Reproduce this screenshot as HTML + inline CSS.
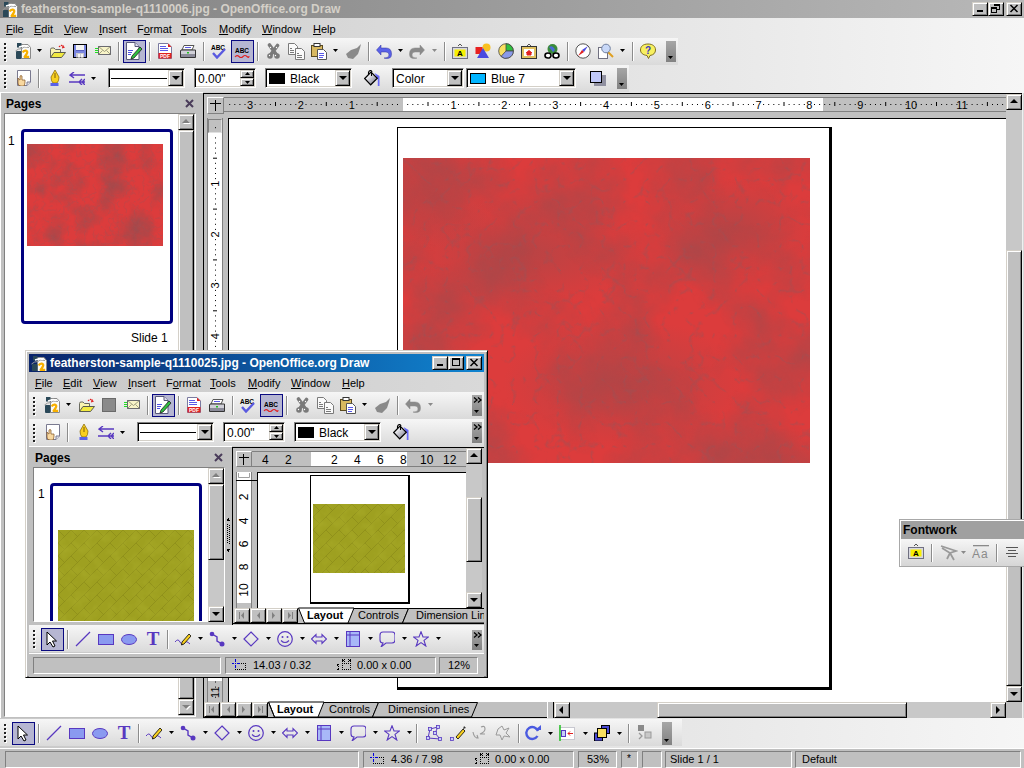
<!DOCTYPE html>
<html><head><meta charset="utf-8"><style>
*{margin:0;padding:0;box-sizing:border-box}
html,body{width:1024px;height:768px;overflow:hidden;background:#c0c0c0;font-family:"Liberation Sans",sans-serif;font-size:11px;color:#000}
.a{position:absolute}
.t{position:absolute;white-space:nowrap;line-height:13px}
.sunk{position:absolute;border-style:solid;border-width:1px;border-color:#808080 #fff #fff #808080}
.fld{position:absolute;background:#fff;border:1px solid;border-color:#808080 #fff #fff #808080;box-shadow:inset 1px 1px 0 #000,inset -1px -1px 0 #d4d0c8}
.btn{position:absolute;background:#c0c0c0;border:1px solid;border-color:#d4d0c8 #000 #000 #d4d0c8;box-shadow:inset 1px 1px 0 #fff,inset -1px -1px 0 #808080}
.tb{position:absolute;background:linear-gradient(#f6f6f6,#dadada)}
.grip{position:absolute;width:2px;background:repeating-linear-gradient(#2a2a2a 0 2px,transparent 2px 3px)}
.chev{position:absolute;background:linear-gradient(#a6a6a6,#828282)}
.cb{position:absolute;background:#c0c0c0;border:1px solid;border-color:#d4d0c8 #000 #000 #d4d0c8;box-shadow:inset 1px 1px 0 #fff,inset -1px -1px 0 #808080}
.arr{position:absolute;width:0;height:0;border-style:solid;border-color:#000 transparent transparent transparent;border-width:4px 4px 0 4px}
</style></head><body>
<svg width="0" height="0" style="position:absolute">
<defs>
<filter id="redtex" x="0" y="0" width="100%" height="100%" color-interpolation-filters="sRGB">
 <feTurbulence type="fractalNoise" baseFrequency="0.04" numOctaves="5" seed="4" result="n1"/>
 <feColorMatrix in="n1" type="matrix" values="0 0 0 0 0.62  0 0 0 0 0.29  0 0 0 0 0.30  1.8 0 0 0 -0.7" result="c1"/>
 <feTurbulence type="turbulence" baseFrequency="0.12" numOctaves="2" seed="3" result="n2"/>
 <feColorMatrix in="n2" type="matrix" values="0 0 0 0 0.6  0 0 0 0 0.32  0 0 0 0 0.34  -2 0 0 0 0.35" result="c2"/>
 <feMerge><feMergeNode in="c1"/><feMergeNode in="c2"/></feMerge>
</filter>
<filter id="redtex2" x="0" y="0" width="100%" height="100%" color-interpolation-filters="sRGB">
 <feTurbulence type="fractalNoise" baseFrequency="0.012" numOctaves="6" seed="7" result="n1"/>
 <feColorMatrix in="n1" type="matrix" values="0 0 0 0 0.62  0 0 0 0 0.29  0 0 0 0 0.30  1.6 0 0 0 -0.65" result="c1"/>
 <feTurbulence type="turbulence" baseFrequency="0.045" numOctaves="3" seed="3" result="n2"/>
 <feColorMatrix in="n2" type="matrix" values="0 0 0 0 0.6  0 0 0 0 0.32  0 0 0 0 0.34  -3 0 0 0 0.5" result="c2"/>
 <feMerge><feMergeNode in="c1"/><feMergeNode in="c2"/></feMerge>
</filter>
<filter id="olivetex" x="0" y="0" width="100%" height="100%" color-interpolation-filters="sRGB">
 <feTurbulence type="fractalNoise" baseFrequency="0.08" numOctaves="3" seed="2"/>
 <feColorMatrix type="matrix" values="0 0 0 0 0.66  0 0 0 0 0.67  0 0 0 0 0.16  1.4 0 0 0 -0.6"/>
</filter>
<pattern id="herr" width="13" height="13" patternUnits="userSpaceOnUse">
 <path d="M0 0 L6.5 6.5 M6.5 6.5 L13 0 M0 13 L6.5 6.5" stroke="#6a6a10" stroke-width=".8" opacity=".35" fill="none"/>
</pattern>
</defs></svg>
<div class="a" style="left:0px;top:0px;width:1024px;height:18px;background:linear-gradient(90deg,#808080,#b8b8b8)"></div>
<svg class="a" style="left:2px;top:1px" width="16" height="16" viewBox="0 0 16 16" ><path d="M6.5 2.5 H13 L15.5 5.5 V16.5 H6.5Z" fill="#fafafa" stroke="#8a8a8a" stroke-width="1"/>
<rect x="1" y="9" width="5.5" height="8" rx="1" fill="#2a4858"/><rect x="2" y="1" width="4.5" height="4.5" fill="#2a4858"/>
<path d="M0.5 9 Q3 6.5 7 6.5 L9 5 L14 5.5" fill="none" stroke="#9a9a9a" stroke-width="1"/><path d="M4 5 L9 3.5 L12 4.5" fill="none" stroke="#fff" stroke-width="1.4"/>
<path d="M7.8 10.5 Q8.6 8.5 10.8 8.7 Q13.2 9.3 11.6 12 L9.6 14.8 H14.2" fill="none" stroke="#f8b000" stroke-width="2.3" stroke-linejoin="round"/></svg>
<div class="t" style="left:21px;top:3px;font-weight:bold;color:#d4d0c8;font-size:12px">featherston-sample-q1110006.jpg - OpenOffice.org Draw</div>
<div class="btn" style="left:972px;top:2px;width:16px;height:14px"></div>
<div class="btn" style="left:988px;top:2px;width:16px;height:14px"></div>
<div class="btn" style="left:1006px;top:2px;width:16px;height:14px"></div>
<svg class="a" style="left:976px;top:4px" width="9" height="9" viewBox="0 0 9 9" shape-rendering="crispEdges"><rect x="1" y="6" width="6" height="2" fill="#000"/></svg>
<svg class="a" style="left:991px;top:3px" width="10" height="10" viewBox="0 0 10 10" shape-rendering="crispEdges"><rect x="3" y="1" width="6" height="2" fill="#000"/><rect x="8" y="1" width="1" height="5" fill="#000"/><rect x="6" y="6" width="3" height="1" fill="#000"/><rect x="0" y="4" width="6" height="2" fill="#c0c0c0"/><rect x="0" y="4" width="6" height="2" fill="#000"/><rect x="0" y="4" width="1" height="6" fill="#000"/><rect x="5" y="4" width="1" height="6" fill="#000"/><rect x="0" y="9" width="6" height="1" fill="#000"/></svg>
<svg class="a" style="left:1009px;top:4px" width="10" height="9" viewBox="0 0 10 9" ><path d="M1.5 1 L8.5 8 M8.5 1 L1.5 8" stroke="#000" stroke-width="1.5"/></svg>
<div class="a" style="left:0px;top:18px;width:1024px;height:75px;background:linear-gradient(90deg,#c8c8c8,#f6f6f6)"></div>
<div class="t" style="left:6px;top:23px;font-size:11px"><u>F</u>ile</div>
<div class="t" style="left:34px;top:23px;font-size:11px"><u>E</u>dit</div>
<div class="t" style="left:64px;top:23px;font-size:11px"><u>V</u>iew</div>
<div class="t" style="left:99px;top:23px;font-size:11px"><u>I</u>nsert</div>
<div class="t" style="left:137px;top:23px;font-size:11px">F<u>o</u>rmat</div>
<div class="t" style="left:181px;top:23px;font-size:11px"><u>T</u>ools</div>
<div class="t" style="left:219px;top:23px;font-size:11px"><u>M</u>odify</div>
<div class="t" style="left:262px;top:23px;font-size:11px"><u>W</u>indow</div>
<div class="t" style="left:313px;top:23px;font-size:11px"><u>H</u>elp</div>
<div class="tb" style="left:0px;top:38px;width:678px;height:27px"></div>
<svg class="a" style="left:4px;top:43px" width="3" height="19" viewBox="0 0 3 19" shape-rendering="crispEdges"><rect x="1" y="1" width="2" height="2" fill="#fff"/><rect x="0" y="0" width="2" height="2" fill="#202020"/><rect x="1" y="5" width="2" height="2" fill="#fff"/><rect x="0" y="4" width="2" height="2" fill="#202020"/><rect x="1" y="9" width="2" height="2" fill="#fff"/><rect x="0" y="8" width="2" height="2" fill="#202020"/><rect x="1" y="13" width="2" height="2" fill="#fff"/><rect x="0" y="12" width="2" height="2" fill="#202020"/><rect x="1" y="17" width="2" height="2" fill="#fff"/><rect x="0" y="16" width="2" height="2" fill="#202020"/></svg>
<svg class="a" style="left:15px;top:42px" width="17" height="18" viewBox="0 0 17 18" ><path d="M6.5 2.5 H13 L15.5 5.5 V16.5 H6.5Z" fill="#fafafa" stroke="#8a8a8a" stroke-width="1"/>
<rect x="1" y="9" width="5.5" height="8" rx="1" fill="#2a4858"/><rect x="2" y="1" width="4.5" height="4.5" fill="#2a4858"/>
<path d="M0.5 9 Q3 6.5 7 6.5 L9 5 L14 5.5" fill="none" stroke="#9a9a9a" stroke-width="1"/><path d="M4 5 L9 3.5 L12 4.5" fill="none" stroke="#fff" stroke-width="1.4"/>
<path d="M7.8 10.5 Q8.6 8.5 10.8 8.7 Q13.2 9.3 11.6 12 L9.6 14.8 H14.2" fill="none" stroke="#f8b000" stroke-width="2.3" stroke-linejoin="round"/></svg>
<svg class="a" style="left:37px;top:49px" width="5" height="3" viewBox="0 0 5 3" ><path d="M0 0H5L2.5 3Z" fill="#000"/></svg>
<svg class="a" style="left:49px;top:44px" width="17" height="15" viewBox="0 0 17 15" ><path d="M1.5 13.5 V5.5 Q1.5 4 3 4 H5 L6.5 5.5 H11.5 V8" fill="#faf4b0" stroke="#6a6a60" stroke-width="1"/>
<path d="M1.5 13.5 L5 8.5 H16.5 L12.5 13.5Z" fill="#f2ea40" stroke="#5a5a50" stroke-width="1"/>
<path d="M10 3 Q12 0.5 14.5 2" fill="none" stroke="#e02020" stroke-width="1.2" stroke-dasharray="1.5 .8"/><path d="M13.5 1 L16 3.5 L13 4.5Z" fill="#e02020"/></svg>
<svg class="a" style="left:73px;top:44px" width="14" height="14" viewBox="0 0 14 14" ><rect x="0.5" y="0.5" width="13" height="13" fill="#7a86e0" stroke="#000" stroke-width="1"/><rect x="0" y="0" width="14" height="1" fill="#000"/>
<rect x="3" y="1" width="8" height="5" fill="#f4f4f4"/><rect x="3" y="6" width="8" height="1" fill="#5a62c0"/><rect x="3" y="9" width="8" height="4.5" fill="#c8c8d0"/><rect x="5" y="10" width="2" height="3.5" fill="#f4f4f4"/><rect x="8" y="10" width="2" height="3.5" fill="#f4f4f4"/></svg>
<svg class="a" style="left:95px;top:46px" width="17" height="10" viewBox="0 0 17 10" ><rect x="3.5" y="0.5" width="12" height="8" fill="#f8f4c8" stroke="#6a6a70"/><path d="M3.5 0.5 L9.5 5.5 L15.5 0.5 M3.5 8.5 L7.5 4.5 M15.5 8.5 L11.5 4.5" fill="none" stroke="#8a8a70" stroke-width=".8"/>
<path d="M0 2.5H3M0 4.5H3M0 6.5H3" stroke="#20e020" stroke-width="1"/></svg>
<div class="a" style="left:118px;top:42px;width:1px;height:19px;background:#8c8c8c"></div><div class="a" style="left:119px;top:42px;width:1px;height:19px;background:#fff"></div>
<div class="a" style="left:123px;top:40px;width:23px;height:23px;background:#b6b6d2;border:1px solid #0a0a80"></div>
<svg class="a" style="left:124px;top:41px" width="20" height="20" viewBox="0 0 20 20" ><path d="M2.5 1.5 H11 L15 5.5 V18.5 H2.5Z" fill="#fff" stroke="#58587a" stroke-width="1"/><path d="M11 1.5 V5.5 H15" fill="#dde" stroke="#58587a"/>
<path d="M4 9.5H9M4 11.5H8M4 13.5H7" stroke="#5050e0" stroke-width="1"/>
<path d="M8 15 L16 6 L18 8 L10 17 L7 18Z" fill="#30c040" stroke="#202020" stroke-width=".8"/></svg>
<div class="a" style="left:149px;top:42px;width:1px;height:19px;background:#8c8c8c"></div><div class="a" style="left:150px;top:42px;width:1px;height:19px;background:#fff"></div>
<svg class="a" style="left:158px;top:43px" width="14" height="16" viewBox="0 0 14 16" ><path d="M0.5 0.5 H10 L13.5 4 V15.5 H0.5Z" fill="#fff" stroke="#7a7aa0"/><path d="M10 0.5 L13.5 4 H10Z" fill="#e02020"/>
<path d="M2 3.5H8M2 5.5H10M2 7.5H10" stroke="#5a5ae8"/><rect x="0.5" y="10" width="13" height="5.5" fill="#e02020"/>
<text x="7" y="14.7" font-size="5" font-family="Liberation Sans" font-weight="bold" fill="#fff" text-anchor="middle">PDF</text></svg>
<svg class="a" style="left:180px;top:45px" width="16" height="13" viewBox="0 0 16 13" ><path d="M4 0.5 H14 L12 5 H2Z" fill="#fff" stroke="#555"/><path d="M5 2.5H11" stroke="#5a5ae8" stroke-width="1"/>
<path d="M1 5 H15.5 V12.5 H0.5 V6Z" fill="#d0d0d8" stroke="#333"/><rect x="1" y="9" width="14" height="3" fill="#8a8a98"/><rect x="7" y="7" width="2" height="1.5" fill="#20c020"/></svg>
<div class="a" style="left:203px;top:42px;width:1px;height:19px;background:#8c8c8c"></div><div class="a" style="left:204px;top:42px;width:1px;height:19px;background:#fff"></div>
<svg class="a" style="left:210px;top:44px" width="17" height="15" viewBox="0 0 17 15" ><text x="8" y="6" font-size="6.5" font-family="Liberation Sans" font-weight="bold" fill="#000" text-anchor="middle">ABC</text>
<path d="M3 9 L7 13.5 L15 5" fill="none" stroke="#5a5ae0" stroke-width="2.4"/></svg>
<div class="a" style="left:231px;top:40px;width:23px;height:23px;background:#b6b6d2;border:1px solid #0a0a80"></div>
<svg class="a" style="left:234px;top:45px" width="16" height="14" viewBox="0 0 16 14" ><text x="8" y="8" font-size="6.5" font-family="Liberation Sans" font-weight="bold" fill="#000" text-anchor="middle">ABC</text>
<path d="M1 12 Q3 9.5 5 11.5 T9 11.5 T13 11.5 T15 11" fill="none" stroke="#e02020" stroke-width="1.1"/></svg>
<div class="a" style="left:257px;top:42px;width:1px;height:19px;background:#8c8c8c"></div><div class="a" style="left:258px;top:42px;width:1px;height:19px;background:#fff"></div>
<svg class="a" style="left:267px;top:43px" width="13" height="17" viewBox="0 0 13 17" ><path d="M2.5 2 L9.5 12 M10.5 2.5 L3.5 12" stroke="#7a7a7a" stroke-width="3.6" stroke-linecap="round"/>
<circle cx="3" cy="13" r="2.8" fill="#7a7a7a"/><circle cx="10" cy="13" r="2.8" fill="#7a7a7a"/>
<circle cx="3.5" cy="4.5" r=".7" fill="#fff"/><circle cx="9.5" cy="4.5" r=".7" fill="#fff"/><circle cx="2.5" cy="12.5" r=".7" fill="#fff"/><circle cx="8.5" cy="12.5" r=".7" fill="#fff"/></svg>
<svg class="a" style="left:288px;top:43px" width="17" height="17" viewBox="0 0 17 17" ><path d="M0.5 0.5 H6.5 L9.5 3.5 V11.5 H0.5Z" fill="#fafafa" stroke="#7a7a7a"/><path d="M2 5.5H4M2 7.5H6M2 9.5H6" stroke="#7a7a7a" stroke-width="1"/>
<path d="M7.5 5.5 H13.5 L16.5 8.5 V16.5 H7.5Z" fill="#fafafa" stroke="#7a7a7a"/><path d="M9 10.5H11M9 12.5H14M9 14.5H14" stroke="#7a7a7a" stroke-width="1"/></svg>
<svg class="a" style="left:311px;top:43px" width="16" height="17" viewBox="0 0 16 17" ><rect x="0.5" y="2.5" width="11" height="11" fill="#d8b860" stroke="#5a4a20"/><rect x="3" y="0.5" width="6" height="3" fill="#fff" stroke="#333"/>
<path d="M6.5 6.5 H12.5 L15.5 9.5 V16.5 H6.5Z" fill="#fff" stroke="#555"/><path d="M8 10.5H13M8 12.5H13M8 14.5H12" stroke="#5a5ae8" stroke-width="1"/></svg>
<svg class="a" style="left:333px;top:49px" width="5" height="3" viewBox="0 0 5 3" ><path d="M0 0H5L2.5 3Z" fill="#000"/></svg>
<svg class="a" style="left:345px;top:44px" width="16" height="16" viewBox="0 0 16 16" ><path d="M16 0 L12 4 L6 6 L1 10 L3 14 L8 15 L13 10 L15 4Z" fill="#8a8a8a"/></svg>
<div class="a" style="left:368px;top:42px;width:1px;height:19px;background:#8c8c8c"></div><div class="a" style="left:369px;top:42px;width:1px;height:19px;background:#fff"></div>
<svg class="a" style="left:376px;top:44px" width="16" height="16" viewBox="0 0 16 16" ><path d="M5 1 L0.5 6 L5 11 V8 H10 Q13 8 13 11 Q13 14 9 14 L8 14 Q15.5 16 15.5 10 Q15.5 4 10 4 H5Z" fill="#5a62e8" stroke="#3030a0" stroke-width=".5"/></svg>
<svg class="a" style="left:398px;top:49px" width="5" height="3" viewBox="0 0 5 3" ><path d="M0 0H5L2.5 3Z" fill="#000"/></svg>
<svg class="a" style="left:409px;top:44px" width="16" height="16" viewBox="0 0 16 16" ><g transform="translate(16,0) scale(-1,1)"><path d="M5 1 L0.5 6 L5 11 V8 H10 Q13 8 13 11 Q13 14 9 14 L8 14 Q15.5 16 15.5 10 Q15.5 4 10 4 H5Z" fill="#8a8a8a" stroke="#8a8a8a" stroke-width=".5"/></g></svg>
<svg class="a" style="left:432px;top:49px" width="5" height="3" viewBox="0 0 5 3" ><path d="M0 0H5L2.5 3Z" fill="#8a8a8a"/></svg>
<div class="a" style="left:444px;top:42px;width:1px;height:19px;background:#8c8c8c"></div><div class="a" style="left:445px;top:42px;width:1px;height:19px;background:#fff"></div>
<svg class="a" style="left:452px;top:43px" width="16" height="16" viewBox="0 0 16 16" ><path d="M6 3 L8 1 L10 3" fill="none" stroke="#555"/><rect x="0.5" y="4.5" width="15" height="11" fill="#d8d8e0" stroke="#707080"/>
<rect x="2.5" y="6.5" width="11" height="7" fill="#f8f000"/><text x="8" y="13.2" font-size="8" font-family="Liberation Sans" font-weight="bold" fill="#000" text-anchor="middle">A</text></svg>
<svg class="a" style="left:475px;top:43px" width="16" height="16" viewBox="0 0 16 16" ><circle cx="11.5" cy="4.5" r="4" fill="#f8c020"/><rect x="0.5" y="4" width="7" height="7" fill="#e82020"/><path d="M8 5 L14 15 H2Z" fill="#4a4ae0"/></svg>
<svg class="a" style="left:498px;top:43px" width="16" height="16" viewBox="0 0 16 16" ><circle cx="8" cy="8" r="7.3" fill="#f8e060" stroke="#444" stroke-width=".8"/><path d="M8 8 V0.7 A7.3 7.3 0 0 1 15.3 8Z" fill="#30c040" stroke="#444" stroke-width=".8"/>
<path d="M8 8 H15.3 A7.3 7.3 0 0 1 3 13.4Z" fill="#8a9ae8" stroke="#444" stroke-width=".8"/></svg>
<svg class="a" style="left:521px;top:43px" width="16" height="16" viewBox="0 0 16 16" ><path d="M6 3 L8 1 L10 3" fill="none" stroke="#555"/><rect x="0.5" y="3.5" width="15" height="12" fill="#e0c060" stroke="#333"/>
<rect x="3" y="6" width="10" height="7" fill="#fff"/><path d="M5 10 L8 7.5 L11 10 M6 10 V12 H10 V10" fill="#e02020" stroke="#e02020" stroke-width="1"/></svg>
<svg class="a" style="left:544px;top:43px" width="16" height="16" viewBox="0 0 16 16" ><circle cx="8.5" cy="6" r="5" fill="#3a8a3a"/><path d="M5 4 Q8 2 10 5 Q12 7 9 9" fill="#4a6ad8"/>
<path d="M1 12.5 A3 2.5 0 1 0 7 12.5 A3 2.5 0 1 0 1 12.5Z M9 12.5 A3 2.5 0 1 0 15 12.5 A3 2.5 0 1 0 9 12.5Z" fill="#fff" stroke="#000" stroke-width="1.6"/></svg>
<div class="a" style="left:567px;top:42px;width:1px;height:19px;background:#8c8c8c"></div><div class="a" style="left:568px;top:42px;width:1px;height:19px;background:#fff"></div>
<svg class="a" style="left:575px;top:43px" width="16" height="16" viewBox="0 0 16 16" ><circle cx="8" cy="8" r="7.2" fill="#fff" stroke="#555" stroke-width="1"/><path d="M13 3 L9 9 L7 7Z" fill="#4a4ae0"/><path d="M3 13 L7 7 L9 9Z" fill="#e02020"/></svg>
<svg class="a" style="left:598px;top:43px" width="16" height="16" viewBox="0 0 16 16" ><rect x="0.5" y="4.5" width="9" height="11" fill="#fff" stroke="#707080"/><path d="M9.5 8.5 L15 14" stroke="#e0a020" stroke-width="2"/><circle cx="8" cy="5.5" r="4.3" fill="#c8d8f8" stroke="#7080a0" stroke-width="1"/></svg>
<svg class="a" style="left:620px;top:49px" width="5" height="3" viewBox="0 0 5 3" ><path d="M0 0H5L2.5 3Z" fill="#000"/></svg>
<div class="a" style="left:632px;top:42px;width:1px;height:19px;background:#8c8c8c"></div><div class="a" style="left:633px;top:42px;width:1px;height:19px;background:#fff"></div>
<svg class="a" style="left:640px;top:43px" width="16" height="16" viewBox="0 0 16 16" ><path d="M8 1 C13 1 15.5 3.5 15.5 7 C15.5 10 13.5 12 10 12.5 L8.5 15.5 L7 12.5 C3 12 0.5 10 0.5 7 C0.5 3.5 3 1 8 1Z" fill="#f8f060" stroke="#807020" stroke-width="1"/>
<text x="8" y="10.5" font-size="10" font-family="Liberation Sans" font-weight="bold" fill="#3a3ac0" text-anchor="middle">?</text></svg>
<div class="chev" style="left:666px;top:41px;width:10px;height:21px"></div>
<svg class="a" style="left:668px;top:56px" width="5" height="3" viewBox="0 0 5 3" ><path d="M0 0H5L2.5 3Z" fill="#000"/></svg>
<div class="tb" style="left:0px;top:65px;width:629px;height:27px"></div>
<svg class="a" style="left:4px;top:70px" width="3" height="19" viewBox="0 0 3 19" shape-rendering="crispEdges"><rect x="1" y="1" width="2" height="2" fill="#fff"/><rect x="0" y="0" width="2" height="2" fill="#202020"/><rect x="1" y="5" width="2" height="2" fill="#fff"/><rect x="0" y="4" width="2" height="2" fill="#202020"/><rect x="1" y="9" width="2" height="2" fill="#fff"/><rect x="0" y="8" width="2" height="2" fill="#202020"/><rect x="1" y="13" width="2" height="2" fill="#fff"/><rect x="0" y="12" width="2" height="2" fill="#202020"/><rect x="1" y="17" width="2" height="2" fill="#fff"/><rect x="0" y="16" width="2" height="2" fill="#202020"/></svg>
<svg class="a" style="left:15px;top:70px" width="16" height="16" viewBox="0 0 16 16" ><path d="M2.5 0.5 H15.5 V12 L12 15.5 H2.5Z" fill="#fff" stroke="#7a7a90"/><path d="M12 15.5 V12 H15.5" fill="#e0e0e8" stroke="#7a7a90"/>
<path d="M3 8 V13 Q3 16 6 16 H9 Q10 14 10 12 V10 H7 V6 Q6 5 5 6 V10 Q3 9 3 8Z" fill="#f8d8a0" stroke="#805020" stroke-width=".7"/></svg>
<div class="a" style="left:38px;top:69px;width:1px;height:19px;background:#8c8c8c"></div><div class="a" style="left:39px;top:69px;width:1px;height:19px;background:#fff"></div>
<svg class="a" style="left:50px;top:70px" width="10" height="16" viewBox="0 0 10 16" ><path d="M5 0 L9 7 Q9 11 7 13 H3 Q1 11 1 7Z" fill="#f8d020" stroke="#806000" stroke-width=".7"/><path d="M5 3 V8" stroke="#604000" stroke-width=".8"/>
<rect x="0.5" y="13" width="8" height="3" fill="#5a62e8"/></svg>
<svg class="a" style="left:69px;top:72px" width="16" height="13" viewBox="0 0 16 13" ><path d="M16 3H2M5 0 L1 3 L5 6" fill="none" stroke="#5838c0" stroke-width="1.4"/><path d="M0 10H16M13 7 L10 10 L13 13 M16 7 L13 10 L16 13" fill="none" stroke="#5838c0" stroke-width="1.4"/></svg>
<svg class="a" style="left:91px;top:77px" width="5" height="3" viewBox="0 0 5 3" ><path d="M0 0H5L2.5 3Z" fill="#000"/></svg>
<div class="fld" style="left:108px;top:68px;width:77px;height:20px"></div>
<div class="cb" style="left:168px;top:70px;width:15px;height:16px"></div>
<div class="arr" style="left:172px;top:76px"></div>
<div class="a" style="left:111px;top:78px;width:56px;height:1px;background:#000"></div>
<div class="fld" style="left:194px;top:68px;width:62px;height:20px"></div>
<div class="t" style="left:198px;top:73px;font-size:12px">0.00"</div>
<div class="cb" style="left:240px;top:70px;width:14px;height:8px"></div>
<div class="cb" style="left:240px;top:78px;width:14px;height:8px"></div>
<svg class="a" style="left:245px;top:72px" width="5" height="3" viewBox="0 0 5 3" ><path d="M0 3H5L2.5 0Z" fill="#000"/></svg>
<svg class="a" style="left:245px;top:81px" width="5" height="3" viewBox="0 0 5 3" ><path d="M0 0H5L2.5 3Z" fill="#000"/></svg>
<div class="fld" style="left:265px;top:68px;width:87px;height:20px"></div>
<div class="cb" style="left:335px;top:70px;width:15px;height:16px"></div>
<div class="arr" style="left:339px;top:76px"></div>
<div class="a" style="left:269px;top:73px;width:16px;height:11px;background:#000"></div>
<div class="t" style="left:290px;top:73px;font-size:12px">Black</div>
<svg class="a" style="left:364px;top:70px" width="16" height="17" viewBox="0 0 16 17" ><defs><linearGradient id="bk" x1="0" y1="0" x2="1" y2="1"><stop offset="0.2" stop-color="#fff"/><stop offset="1" stop-color="#6a6a80"/></linearGradient></defs>
<path d="M10.5 3 L15.5 6 V16 H13.8 V9.5Z" fill="#6a6af8"/>
<path d="M0.7 8.5 L7 2 L13.3 8.3 L6.7 14.8Z" fill="url(#bk)" stroke="#000" stroke-width="1.2"/>
<path d="M4.5 4.5 V2.5 Q5 0.5 6.5 0.5 Q7.5 0.5 8 2" fill="none" stroke="#000" stroke-width="1.1"/><path d="M7.5 1.5 V6" stroke="#000" stroke-width="1.1"/></svg>
<div class="fld" style="left:392px;top:68px;width:72px;height:20px"></div>
<div class="cb" style="left:447px;top:70px;width:15px;height:16px"></div>
<div class="arr" style="left:451px;top:76px"></div>
<div class="t" style="left:396px;top:73px;font-size:12px">Color</div>
<div class="fld" style="left:466px;top:68px;width:110px;height:20px"></div>
<div class="cb" style="left:559px;top:70px;width:15px;height:16px"></div>
<div class="arr" style="left:563px;top:76px"></div>
<div class="a" style="left:470px;top:73px;width:16px;height:11px;background:#00b4ff;border:1px solid #000"></div>
<div class="t" style="left:491px;top:73px;font-size:12px">Blue 7</div>
<svg class="a" style="left:590px;top:71px" width="16" height="15" viewBox="0 0 16 15" ><rect x="4" y="4" width="12" height="11" fill="#9090a0"/><rect x="0.5" y="0.5" width="11" height="11" fill="#c0c8f8" stroke="#000"/></svg>
<div class="chev" style="left:617px;top:68px;width:10px;height:21px"></div>
<svg class="a" style="left:619px;top:83px" width="5" height="3" viewBox="0 0 5 3" ><path d="M0 0H5L2.5 3Z" fill="#000"/></svg>
<div class="a" style="left:0px;top:92px;width:203px;height:626px;background:#c0c0c0;border-top:1px solid #fff;border-left:1px solid #fff"></div>
<div class="t" style="left:6px;top:97px;font-weight:bold;font-size:12px;line-height:14px">Pages</div>
<svg class="a" style="left:185px;top:99px" width="9" height="9" viewBox="0 0 9 9" ><path d="M1 1 L8 8 M8 1 L1 8" stroke="#4a3c5a" stroke-width="2"/></svg>
<div class="a" style="left:4px;top:113px;width:192px;height:604px;background:#fff;border:1px solid;border-color:#808080 #fff #fff #808080"></div>
<div class="a" style="left:21px;top:129px;width:152px;height:195px;border:3px solid #000080;border-radius:4px;background:#fff"></div>
<svg class="a" style="left:27px;top:144px" width="136" height="102"><rect width="136" height="102" fill="#dc3c3c"/><rect width="136" height="102" filter="url(#redtex)"/></svg>
<div class="t" style="left:8px;top:135px;font-size:12px">1</div>
<div class="t" style="left:131px;top:332px;font-size:12px">Slide 1</div>
<div class="a" style="left:178px;top:114px;width:17px;height:602px;background:#c8c8c8"></div>
<div class="btn" style="left:178px;top:114px;width:16px;height:16px"></div>
<svg class="a" style="left:182px;top:119px" width="9" height="5" viewBox="0 0 9 5" ><path d="M1 5H9L5 1Z" fill="#fff"/><path d="M0 4H8L4 0Z" fill="#808080"/></svg>
<div class="btn" style="left:178px;top:130px;width:16px;height:569px"></div>
<div class="btn" style="left:178px;top:699px;width:16px;height:16px"></div>
<svg class="a" style="left:182px;top:705px" width="9" height="5" viewBox="0 0 9 5" ><path d="M1 1H9L5 5Z" fill="#fff"/><path d="M0 0H8L4 4Z" fill="#808080"/></svg>
<div class="a" style="left:203px;top:93px;width:819px;height:625px;background:#c0c0c0;border-left:1px solid #000;border-top:1px solid #000"></div>
<div class="a" style="left:207px;top:97px;width:17px;height:17px;border:1px solid;border-color:#fff #808080 #808080 #fff"></div>
<div class="a" style="left:215px;top:100px;width:1px;height:11px;background:#000"></div>
<div class="a" style="left:210px;top:103px;width:11px;height:1px;background:#000"></div>
<div class="a" style="left:224px;top:97px;width:782px;height:15px;background:#c0c0c0;border-top:1px solid #808080;border-bottom:1px solid #808080"></div>
<div class="a" style="left:403px;top:98px;width:420px;height:13px;background:#fff"></div>
<svg class="a" style="left:226px;top:97px" width="778" height="15"><g fill="#000"><rect x="3.2" y="7" width="1" height="1"/><rect x="8.3" y="7" width="1" height="1"/><rect x="13.4" y="7" width="1" height="1"/><rect x="18.5" y="7" width="1" height="1"/><text x="24.1" y="11.5" font-size="11" font-family="Liberation Sans" text-anchor="middle">3</text><rect x="28.6" y="7" width="1" height="1"/><rect x="33.7" y="7" width="1" height="1"/><rect x="38.8" y="7" width="1" height="1"/><rect x="43.9" y="7" width="1" height="1"/><rect x="49.0" y="5" width="1" height="4"/><rect x="54.1" y="7" width="1" height="1"/><rect x="59.1" y="7" width="1" height="1"/><rect x="64.2" y="7" width="1" height="1"/><rect x="69.3" y="7" width="1" height="1"/><text x="74.9" y="11.5" font-size="11" font-family="Liberation Sans" text-anchor="middle">2</text><rect x="79.5" y="7" width="1" height="1"/><rect x="84.6" y="7" width="1" height="1"/><rect x="89.7" y="7" width="1" height="1"/><rect x="94.7" y="7" width="1" height="1"/><rect x="99.8" y="5" width="1" height="4"/><rect x="104.9" y="7" width="1" height="1"/><rect x="110.0" y="7" width="1" height="1"/><rect x="115.1" y="7" width="1" height="1"/><rect x="120.2" y="7" width="1" height="1"/><text x="125.8" y="11.5" font-size="11" font-family="Liberation Sans" text-anchor="middle">1</text><rect x="130.3" y="7" width="1" height="1"/><rect x="135.4" y="7" width="1" height="1"/><rect x="140.5" y="7" width="1" height="1"/><rect x="145.6" y="7" width="1" height="1"/><rect x="150.7" y="5" width="1" height="4"/><rect x="155.8" y="7" width="1" height="1"/><rect x="160.8" y="7" width="1" height="1"/><rect x="165.9" y="7" width="1" height="1"/><rect x="171.0" y="7" width="1" height="1"/><rect x="181.2" y="7" width="1" height="1"/><rect x="186.3" y="7" width="1" height="1"/><rect x="191.4" y="7" width="1" height="1"/><rect x="196.4" y="7" width="1" height="1"/><rect x="201.5" y="5" width="1" height="4"/><rect x="206.6" y="7" width="1" height="1"/><rect x="211.7" y="7" width="1" height="1"/><rect x="216.8" y="7" width="1" height="1"/><rect x="221.9" y="7" width="1" height="1"/><text x="227.5" y="11.5" font-size="11" font-family="Liberation Sans" text-anchor="middle">1</text><rect x="232.0" y="7" width="1" height="1"/><rect x="237.1" y="7" width="1" height="1"/><rect x="242.2" y="7" width="1" height="1"/><rect x="247.3" y="7" width="1" height="1"/><rect x="252.4" y="5" width="1" height="4"/><rect x="257.5" y="7" width="1" height="1"/><rect x="262.5" y="7" width="1" height="1"/><rect x="267.6" y="7" width="1" height="1"/><rect x="272.7" y="7" width="1" height="1"/><text x="278.3" y="11.5" font-size="11" font-family="Liberation Sans" text-anchor="middle">2</text><rect x="282.9" y="7" width="1" height="1"/><rect x="288.0" y="7" width="1" height="1"/><rect x="293.1" y="7" width="1" height="1"/><rect x="298.1" y="7" width="1" height="1"/><rect x="303.2" y="5" width="1" height="4"/><rect x="308.3" y="7" width="1" height="1"/><rect x="313.4" y="7" width="1" height="1"/><rect x="318.5" y="7" width="1" height="1"/><rect x="323.6" y="7" width="1" height="1"/><text x="329.2" y="11.5" font-size="11" font-family="Liberation Sans" text-anchor="middle">3</text><rect x="333.7" y="7" width="1" height="1"/><rect x="338.8" y="7" width="1" height="1"/><rect x="343.9" y="7" width="1" height="1"/><rect x="349.0" y="7" width="1" height="1"/><rect x="354.1" y="5" width="1" height="4"/><rect x="359.2" y="7" width="1" height="1"/><rect x="364.2" y="7" width="1" height="1"/><rect x="369.3" y="7" width="1" height="1"/><rect x="374.4" y="7" width="1" height="1"/><text x="380.0" y="11.5" font-size="11" font-family="Liberation Sans" text-anchor="middle">4</text><rect x="384.6" y="7" width="1" height="1"/><rect x="389.7" y="7" width="1" height="1"/><rect x="394.8" y="7" width="1" height="1"/><rect x="399.8" y="7" width="1" height="1"/><rect x="404.9" y="5" width="1" height="4"/><rect x="410.0" y="7" width="1" height="1"/><rect x="415.1" y="7" width="1" height="1"/><rect x="420.2" y="7" width="1" height="1"/><rect x="425.3" y="7" width="1" height="1"/><text x="430.9" y="11.5" font-size="11" font-family="Liberation Sans" text-anchor="middle">5</text><rect x="435.4" y="7" width="1" height="1"/><rect x="440.5" y="7" width="1" height="1"/><rect x="445.6" y="7" width="1" height="1"/><rect x="450.7" y="7" width="1" height="1"/><rect x="455.8" y="5" width="1" height="4"/><rect x="460.9" y="7" width="1" height="1"/><rect x="465.9" y="7" width="1" height="1"/><rect x="471.0" y="7" width="1" height="1"/><rect x="476.1" y="7" width="1" height="1"/><text x="481.7" y="11.5" font-size="11" font-family="Liberation Sans" text-anchor="middle">6</text><rect x="486.3" y="7" width="1" height="1"/><rect x="491.4" y="7" width="1" height="1"/><rect x="496.5" y="7" width="1" height="1"/><rect x="501.5" y="7" width="1" height="1"/><rect x="506.6" y="5" width="1" height="4"/><rect x="511.7" y="7" width="1" height="1"/><rect x="516.8" y="7" width="1" height="1"/><rect x="521.9" y="7" width="1" height="1"/><rect x="527.0" y="7" width="1" height="1"/><text x="532.5" y="11.5" font-size="11" font-family="Liberation Sans" text-anchor="middle">7</text><rect x="537.1" y="7" width="1" height="1"/><rect x="542.2" y="7" width="1" height="1"/><rect x="547.3" y="7" width="1" height="1"/><rect x="552.4" y="7" width="1" height="1"/><rect x="557.5" y="5" width="1" height="4"/><rect x="562.6" y="7" width="1" height="1"/><rect x="567.6" y="7" width="1" height="1"/><rect x="572.7" y="7" width="1" height="1"/><rect x="577.8" y="7" width="1" height="1"/><text x="583.4" y="11.5" font-size="11" font-family="Liberation Sans" text-anchor="middle">8</text><rect x="588.0" y="7" width="1" height="1"/><rect x="593.1" y="7" width="1" height="1"/><rect x="598.2" y="7" width="1" height="1"/><rect x="603.2" y="7" width="1" height="1"/><rect x="608.3" y="5" width="1" height="4"/><rect x="613.4" y="7" width="1" height="1"/><rect x="618.5" y="7" width="1" height="1"/><rect x="623.6" y="7" width="1" height="1"/><rect x="628.7" y="7" width="1" height="1"/><text x="634.2" y="11.5" font-size="11" font-family="Liberation Sans" text-anchor="middle">9</text><rect x="638.8" y="7" width="1" height="1"/><rect x="643.9" y="7" width="1" height="1"/><rect x="649.0" y="7" width="1" height="1"/><rect x="654.1" y="7" width="1" height="1"/><rect x="659.2" y="5" width="1" height="4"/><rect x="664.3" y="7" width="1" height="1"/><rect x="669.3" y="7" width="1" height="1"/><rect x="674.4" y="7" width="1" height="1"/><rect x="679.5" y="7" width="1" height="1"/><text x="685.1" y="11.5" font-size="11" font-family="Liberation Sans" text-anchor="middle">10</text><rect x="689.7" y="7" width="1" height="1"/><rect x="694.8" y="7" width="1" height="1"/><rect x="699.9" y="7" width="1" height="1"/><rect x="704.9" y="7" width="1" height="1"/><rect x="710.0" y="5" width="1" height="4"/><rect x="715.1" y="7" width="1" height="1"/><rect x="720.2" y="7" width="1" height="1"/><rect x="725.3" y="7" width="1" height="1"/><rect x="730.4" y="7" width="1" height="1"/><text x="736.0" y="11.5" font-size="11" font-family="Liberation Sans" text-anchor="middle">11</text><rect x="740.5" y="7" width="1" height="1"/><rect x="745.6" y="7" width="1" height="1"/><rect x="750.7" y="7" width="1" height="1"/><rect x="755.8" y="7" width="1" height="1"/><rect x="760.9" y="5" width="1" height="4"/><rect x="766.0" y="7" width="1" height="1"/><rect x="771.0" y="7" width="1" height="1"/><rect x="776.1" y="7" width="1" height="1"/></g></svg>
<div class="a" style="left:207px;top:118px;width:16px;height:584px;background:#c0c0c0;border-left:1px solid #808080;border-right:1px solid #808080"></div>
<div class="a" style="left:208px;top:133px;width:14px;height:548px;background:#fff"></div>
<div class="a" style="left:208px;top:119px;width:14px;height:14px;border:1px solid;border-color:#808080 #e0e0e0 #e0e0e0 #808080"></div>
<svg class="a" style="left:207px;top:118px" width="16" height="584"><g fill="#000"><rect x="8" y="9.2" width="1" height="1"/><rect x="8" y="19.4" width="1" height="1"/><rect x="8" y="24.5" width="1" height="1"/><rect x="8" y="29.6" width="1" height="1"/><rect x="8" y="34.6" width="1" height="1"/><rect x="6" y="39.7" width="4" height="1"/><rect x="8" y="44.8" width="1" height="1"/><rect x="8" y="49.9" width="1" height="1"/><rect x="8" y="55.0" width="1" height="1"/><rect x="8" y="60.1" width="1" height="1"/><text transform="translate(11.5,65.7) rotate(-90)" font-size="11" font-family="Liberation Sans" text-anchor="middle">1</text><rect x="8" y="70.2" width="1" height="1"/><rect x="8" y="75.3" width="1" height="1"/><rect x="8" y="80.4" width="1" height="1"/><rect x="8" y="85.5" width="1" height="1"/><rect x="6" y="90.6" width="4" height="1"/><rect x="8" y="95.7" width="1" height="1"/><rect x="8" y="100.7" width="1" height="1"/><rect x="8" y="105.8" width="1" height="1"/><rect x="8" y="110.9" width="1" height="1"/><text transform="translate(11.5,116.5) rotate(-90)" font-size="11" font-family="Liberation Sans" text-anchor="middle">2</text><rect x="8" y="121.1" width="1" height="1"/><rect x="8" y="126.2" width="1" height="1"/><rect x="8" y="131.3" width="1" height="1"/><rect x="8" y="136.3" width="1" height="1"/><rect x="6" y="141.4" width="4" height="1"/><rect x="8" y="146.5" width="1" height="1"/><rect x="8" y="151.6" width="1" height="1"/><rect x="8" y="156.7" width="1" height="1"/><rect x="8" y="161.8" width="1" height="1"/><text transform="translate(11.5,167.4) rotate(-90)" font-size="11" font-family="Liberation Sans" text-anchor="middle">3</text><rect x="8" y="171.9" width="1" height="1"/><rect x="8" y="177.0" width="1" height="1"/><rect x="8" y="182.1" width="1" height="1"/><rect x="8" y="187.2" width="1" height="1"/><rect x="6" y="192.3" width="4" height="1"/><rect x="8" y="197.4" width="1" height="1"/><rect x="8" y="202.4" width="1" height="1"/><rect x="8" y="207.5" width="1" height="1"/><rect x="8" y="212.6" width="1" height="1"/><text transform="translate(11.5,218.2) rotate(-90)" font-size="11" font-family="Liberation Sans" text-anchor="middle">4</text><rect x="8" y="222.8" width="1" height="1"/><rect x="8" y="227.9" width="1" height="1"/><rect x="8" y="233.0" width="1" height="1"/><rect x="8" y="238.0" width="1" height="1"/><rect x="6" y="243.1" width="4" height="1"/><rect x="8" y="248.2" width="1" height="1"/><rect x="8" y="253.3" width="1" height="1"/><rect x="8" y="258.4" width="1" height="1"/><rect x="8" y="263.5" width="1" height="1"/><text transform="translate(11.5,269.1) rotate(-90)" font-size="11" font-family="Liberation Sans" text-anchor="middle">5</text><rect x="8" y="273.6" width="1" height="1"/><rect x="8" y="278.7" width="1" height="1"/><rect x="8" y="283.8" width="1" height="1"/><rect x="8" y="288.9" width="1" height="1"/><rect x="6" y="294.0" width="4" height="1"/><rect x="8" y="299.1" width="1" height="1"/><rect x="8" y="304.1" width="1" height="1"/><rect x="8" y="309.2" width="1" height="1"/><rect x="8" y="314.3" width="1" height="1"/><text transform="translate(11.5,319.9) rotate(-90)" font-size="11" font-family="Liberation Sans" text-anchor="middle">6</text><rect x="8" y="324.5" width="1" height="1"/><rect x="8" y="329.6" width="1" height="1"/><rect x="8" y="334.7" width="1" height="1"/><rect x="8" y="339.7" width="1" height="1"/><rect x="6" y="344.8" width="4" height="1"/><rect x="8" y="349.9" width="1" height="1"/><rect x="8" y="355.0" width="1" height="1"/><rect x="8" y="360.1" width="1" height="1"/><rect x="8" y="365.2" width="1" height="1"/><text transform="translate(11.5,370.8) rotate(-90)" font-size="11" font-family="Liberation Sans" text-anchor="middle">7</text><rect x="8" y="375.3" width="1" height="1"/><rect x="8" y="380.4" width="1" height="1"/><rect x="8" y="385.5" width="1" height="1"/><rect x="8" y="390.6" width="1" height="1"/><rect x="6" y="395.7" width="4" height="1"/><rect x="8" y="400.8" width="1" height="1"/><rect x="8" y="405.8" width="1" height="1"/><rect x="8" y="410.9" width="1" height="1"/><rect x="8" y="416.0" width="1" height="1"/><text transform="translate(11.5,421.6) rotate(-90)" font-size="11" font-family="Liberation Sans" text-anchor="middle">8</text><rect x="8" y="426.2" width="1" height="1"/><rect x="8" y="431.3" width="1" height="1"/><rect x="8" y="436.4" width="1" height="1"/><rect x="8" y="441.4" width="1" height="1"/><rect x="6" y="446.5" width="4" height="1"/><rect x="8" y="451.6" width="1" height="1"/><rect x="8" y="456.7" width="1" height="1"/><rect x="8" y="461.8" width="1" height="1"/><rect x="8" y="466.9" width="1" height="1"/><text transform="translate(11.5,472.5) rotate(-90)" font-size="11" font-family="Liberation Sans" text-anchor="middle">9</text><rect x="8" y="477.0" width="1" height="1"/><rect x="8" y="482.1" width="1" height="1"/><rect x="8" y="487.2" width="1" height="1"/><rect x="8" y="492.3" width="1" height="1"/><rect x="6" y="497.4" width="4" height="1"/><rect x="8" y="502.5" width="1" height="1"/><rect x="8" y="507.5" width="1" height="1"/><rect x="8" y="512.6" width="1" height="1"/><rect x="8" y="517.7" width="1" height="1"/><text transform="translate(11.5,523.3) rotate(-90)" font-size="11" font-family="Liberation Sans" text-anchor="middle">10</text><rect x="8" y="527.9" width="1" height="1"/><rect x="8" y="533.0" width="1" height="1"/><rect x="8" y="538.1" width="1" height="1"/><rect x="8" y="543.1" width="1" height="1"/><rect x="6" y="548.2" width="4" height="1"/><rect x="8" y="553.3" width="1" height="1"/><rect x="8" y="558.4" width="1" height="1"/><rect x="8" y="563.5" width="1" height="1"/><rect x="8" y="568.6" width="1" height="1"/><text transform="translate(11.5,574.2) rotate(-90)" font-size="11" font-family="Liberation Sans" text-anchor="middle">11</text><rect x="8" y="578.7" width="1" height="1"/></g></svg>
<div class="a" style="left:228px;top:118px;width:778px;height:584px;background:#fff;border-left:1px solid #000;border-top:1px solid #000"></div>
<div class="a" style="left:397px;top:127px;width:435px;height:563px;border:1px solid #000;border-right-width:3px;border-bottom-width:3px;background:#fff"></div>
<svg class="a" style="left:403px;top:158px" width="407" height="305"><defs><radialGradient id="dk"><stop offset="0" stop-color="#9a4a4c" stop-opacity=".55"/><stop offset="1" stop-color="#9a4a4c" stop-opacity="0"/></radialGradient></defs><rect width="407" height="305" fill="#dc3c3c"/><ellipse cx="120" cy="95" rx="120" ry="55" fill="url(#dk)"/><ellipse cx="330" cy="70" rx="80" ry="50" fill="url(#dk)"/><ellipse cx="220" cy="225" rx="120" ry="65" fill="url(#dk)"/><ellipse cx="30" cy="40" rx="60" ry="50" fill="url(#dk)"/><ellipse cx="370" cy="300" rx="60" ry="30" fill="url(#dk)"/><rect width="407" height="305" filter="url(#redtex2)"/></svg>
<div class="a" style="left:1006px;top:94px;width:16px;height:608px;background:#c8c8c8"></div>
<div class="btn" style="left:1006px;top:94px;width:16px;height:16px"></div>
<svg class="a" style="left:1010px;top:99px" width="8" height="4" viewBox="0 0 8 4" ><path d="M0 4H8L4 0Z" fill="#000"/></svg>
<div class="btn" style="left:1006px;top:250px;width:16px;height:436px"></div>
<div class="btn" style="left:1006px;top:686px;width:16px;height:16px"></div>
<svg class="a" style="left:1010px;top:692px" width="8" height="4" viewBox="0 0 8 4" ><path d="M0 0H8L4 4Z" fill="#000"/></svg>
<div class="a" style="left:1022px;top:93px;width:2px;height:625px;background:#d8d8d8;border-left:1px solid #f0f0f0"></div>
<div class="a" style="left:204px;top:702px;width:802px;height:16px;background:#c0c0c0;border-bottom:1px solid #000"></div>
<div class="btn" style="left:204px;top:702px;width:16px;height:15px"></div>
<div class="btn" style="left:220px;top:702px;width:16px;height:15px"></div>
<div class="btn" style="left:236px;top:702px;width:16px;height:15px"></div>
<div class="btn" style="left:252px;top:702px;width:16px;height:15px"></div>
<svg class="a" style="left:204px;top:702px" width="64" height="15" viewBox="0 0 64 15" ><g fill="#808080"><rect x="5" y="4" width="1" height="7"/><path d="M10 4 L7 7.5 L10 11Z"/><path d="M26 4 L23 7.5 L26 11Z"/><path d="M38 4 L41 7.5 L38 11Z"/><path d="M54 4 L57 7.5 L54 11Z"/><rect x="58" y="4" width="1" height="7"/></g></svg>
<svg class="a" style="left:264px;top:701px" width="290" height="18">
 <path d="M54.5 1.5 H114.5 L108.5 16 H49.5Z" fill="#c0c0c0" stroke="#000"/>
 <path d="M114.5 1.5 H213.5 L207.5 16 H108.5Z" fill="#c0c0c0" stroke="#000"/>
 <path d="M4.5 1 H60 L54 16 H10.5Z" fill="#fff" stroke="#000"/>
 <path d="M4.5 1 L10.5 16" stroke="#000"/>
 <rect x="0" y="16" width="290" height="1" fill="#000"/>
</svg>
<div class="t" style="left:277px;top:703px;font-weight:bold;font-size:11px">Layout</div>
<div class="t" style="left:329px;top:703px;">Controls</div>
<div class="t" style="left:388px;top:703px;">Dimension Lines</div>
<div class="a" style="left:547px;top:702px;width:7px;height:16px;background:#c0c0c0;border-left:1px solid #fff;border-right:1px solid #000"></div>
<div class="a" style="left:554px;top:702px;width:452px;height:16px;background:#c8c8c8"></div>
<div class="btn" style="left:554px;top:702px;width:16px;height:16px"></div>
<svg class="a" style="left:559px;top:706px" width="4" height="8" viewBox="0 0 4 8" ><path d="M4 0V8L0 4Z" fill="#000"/></svg>
<div class="btn" style="left:657px;top:702px;width:250px;height:16px"></div>
<div class="btn" style="left:990px;top:702px;width:16px;height:16px"></div>
<svg class="a" style="left:996px;top:706px" width="4" height="8" viewBox="0 0 4 8" ><path d="M0 0V8L4 4Z" fill="#000"/></svg>
<div class="a" style="left:1006px;top:702px;width:16px;height:16px;background:#c0c0c0"></div>
<div class="a" style="left:0px;top:718px;width:1024px;height:30px;background:linear-gradient(90deg,#c8c8c8,#f6f6f6)"></div>
<div class="tb" style="left:0px;top:719px;width:682px;height:27px"></div>
<svg class="a" style="left:4px;top:724px" width="3" height="19" viewBox="0 0 3 19" shape-rendering="crispEdges"><rect x="1" y="1" width="2" height="2" fill="#fff"/><rect x="0" y="0" width="2" height="2" fill="#202020"/><rect x="1" y="5" width="2" height="2" fill="#fff"/><rect x="0" y="4" width="2" height="2" fill="#202020"/><rect x="1" y="9" width="2" height="2" fill="#fff"/><rect x="0" y="8" width="2" height="2" fill="#202020"/><rect x="1" y="13" width="2" height="2" fill="#fff"/><rect x="0" y="12" width="2" height="2" fill="#202020"/><rect x="1" y="17" width="2" height="2" fill="#fff"/><rect x="0" y="16" width="2" height="2" fill="#202020"/></svg>
<div class="a" style="left:12px;top:722px;width:23px;height:23px;background:#b6b6d2;border:1px solid #0a0a80"></div>
<svg class="a" style="left:16px;top:725px" width="12" height="17" viewBox="0 0 12 17" ><path d="M2 1 V14 L5 11 L8 16 L10 15 L7.5 10 H11.5Z" fill="#fff" stroke="#000" stroke-width="1"/></svg>
<div class="a" style="left:38px;top:724px;width:1px;height:19px;background:#8c8c8c"></div><div class="a" style="left:39px;top:724px;width:1px;height:19px;background:#fff"></div>
<svg class="a" style="left:46px;top:725px" width="16" height="16" viewBox="0 0 16 16" ><path d="M1 15 L15 1" stroke="#5838c0" stroke-width="1.2"/></svg>
<svg class="a" style="left:69px;top:726px" width="16" height="15" viewBox="0 0 16 15" ><rect x="0.5" y="2.5" width="15" height="10" fill="#8a9af0" stroke="#5838c0"/></svg>
<svg class="a" style="left:92px;top:726px" width="16" height="15" viewBox="0 0 16 15" ><ellipse cx="8" cy="7.5" rx="7.5" ry="5" fill="#8a9af0" stroke="#5838c0"/></svg>
<svg class="a" style="left:116px;top:724px" width="16" height="17" viewBox="0 0 16 17" ><text x="8" y="15" font-size="19" font-family="Liberation Serif" font-weight="bold" fill="#5838c0" text-anchor="middle">T</text></svg>
<div class="a" style="left:138px;top:724px;width:1px;height:19px;background:#8c8c8c"></div><div class="a" style="left:139px;top:724px;width:1px;height:19px;background:#fff"></div>
<svg class="a" style="left:146px;top:725px" width="16" height="16" viewBox="0 0 16 16" ><path d="M0 11 Q3 7 5 11 Q7 15 9 12 Q11 9 15 13" fill="none" stroke="#5838c0" stroke-width="1"/><path d="M7 11 L14 3 L16 5 L9 13 L6.5 14Z" fill="#f8d020" stroke="#000" stroke-width=".8"/></svg>
<svg class="a" style="left:169px;top:731px" width="5" height="3" viewBox="0 0 5 3" ><path d="M0 0H5L2.5 3Z" fill="#000"/></svg>
<svg class="a" style="left:180px;top:725px" width="16" height="16" viewBox="0 0 16 16" ><path d="M3 3 L8 6 V10 L13 13" fill="none" stroke="#5838c0" stroke-width="1.4"/><circle cx="3" cy="3" r="2.3" fill="#5838c0"/><circle cx="13" cy="13" r="2.5" fill="#5838c0"/></svg>
<svg class="a" style="left:203px;top:731px" width="5" height="3" viewBox="0 0 5 3" ><path d="M0 0H5L2.5 3Z" fill="#000"/></svg>
<svg class="a" style="left:214px;top:725px" width="16" height="16" viewBox="0 0 16 16" ><path d="M8 1 L15 8 L8 15 L1 8Z" fill="none" stroke="#5838c0" stroke-width="1.2"/></svg>
<svg class="a" style="left:237px;top:731px" width="5" height="3" viewBox="0 0 5 3" ><path d="M0 0H5L2.5 3Z" fill="#000"/></svg>
<svg class="a" style="left:248px;top:725px" width="16" height="16" viewBox="0 0 16 16" ><circle cx="8" cy="8" r="7.3" fill="none" stroke="#5838c0" stroke-width="1.2"/><circle cx="5.5" cy="6" r="1" fill="#5838c0"/><circle cx="10.5" cy="6" r="1" fill="#5838c0"/><path d="M4 9.5 Q8 13.5 12 9.5" fill="none" stroke="#5838c0" stroke-width="1.1"/></svg>
<svg class="a" style="left:271px;top:731px" width="5" height="3" viewBox="0 0 5 3" ><path d="M0 0H5L2.5 3Z" fill="#000"/></svg>
<svg class="a" style="left:282px;top:725px" width="16" height="16" viewBox="0 0 16 16" ><path d="M0.5 8 L5 3.5 V6 H11 V3.5 L15.5 8 L11 12.5 V10 H5 V12.5Z" fill="none" stroke="#5838c0" stroke-width="1.1"/></svg>
<svg class="a" style="left:305px;top:731px" width="5" height="3" viewBox="0 0 5 3" ><path d="M0 0H5L2.5 3Z" fill="#000"/></svg>
<svg class="a" style="left:316px;top:725px" width="16" height="16" viewBox="0 0 16 16" ><rect x="1.5" y="0.5" width="13" height="15" fill="#a8b8f8" stroke="#5838c0"/><path d="M1.5 4 H14.5 M5 0.5 V15.5" stroke="#5838c0" stroke-width="1"/></svg>
<svg class="a" style="left:339px;top:731px" width="5" height="3" viewBox="0 0 5 3" ><path d="M0 0H5L2.5 3Z" fill="#000"/></svg>
<svg class="a" style="left:350px;top:725px" width="16" height="16" viewBox="0 0 16 16" ><path d="M4 1 H13 Q16 1 16 4 V9 Q16 12 13 12 H7 L2 16 L4 12 Q1 12 1 9 V4 Q1 1 4 1Z" fill="none" stroke="#5838c0" stroke-width="1.1"/></svg>
<svg class="a" style="left:373px;top:731px" width="5" height="3" viewBox="0 0 5 3" ><path d="M0 0H5L2.5 3Z" fill="#000"/></svg>
<svg class="a" style="left:384px;top:725px" width="16" height="16" viewBox="0 0 16 16" ><path d="M8 0.8 L10 6 H15.5 L11 9.4 L12.8 15 L8 11.6 L3.2 15 L5 9.4 L0.5 6 H6Z" fill="none" stroke="#5838c0" stroke-width="1.1"/></svg>
<svg class="a" style="left:407px;top:731px" width="5" height="3" viewBox="0 0 5 3" ><path d="M0 0H5L2.5 3Z" fill="#000"/></svg>
<div class="a" style="left:416px;top:724px;width:1px;height:19px;background:#8c8c8c"></div><div class="a" style="left:417px;top:724px;width:1px;height:19px;background:#fff"></div>
<svg class="a" style="left:426px;top:725px" width="16" height="16" viewBox="0 0 16 16" ><path d="M2 13 L4 4 L12 2 L9 8 L14 14Z" fill="none" stroke="#5838c0" stroke-width="1"/><g fill="#c8d0f8" stroke="#5838c0" stroke-width=".8"><rect x="0.5" y="11.5" width="3" height="3"/><rect x="2.5" y="2.5" width="3" height="3"/><rect x="10.5" y="0.5" width="3" height="3"/><rect x="12.5" y="12.5" width="3" height="3"/><rect x="7.5" y="6.5" width="3" height="3"/></g></svg>
<svg class="a" style="left:450px;top:725px" width="16" height="16" viewBox="0 0 16 16" ><path d="M6 12 L13 4 L15 6 L8 14Z" fill="#f8d020" stroke="#000" stroke-width=".8"/><path d="M13 4 L14 1 L16 3Z" fill="#333"/><rect x="0.5" y="12.5" width="3" height="3" fill="#c8d0f8" stroke="#5838c0" stroke-width=".8"/></svg>
<svg class="a" style="left:472px;top:725px" width="16" height="16" viewBox="0 0 16 16" ><path d="M9 2 Q13 0 13 4 Q13 7 8 9 H13" fill="none" stroke="#9a9a9a" stroke-width="1.1"/><path d="M1 7 Q2 13 6 13 M4 13 L6 13 L5 10" fill="none" stroke="#9a9a9a" stroke-width="1.1"/></svg>
<svg class="a" style="left:495px;top:725px" width="16" height="16" viewBox="0 0 16 16" ><path d="M3 4 L7 1 L9 5 L14 3 L11 8 L15 12 L9 11 L7 15 L5 10 L1 10Z" fill="none" stroke="#9a9a9a" stroke-width="1"/></svg>
<div class="a" style="left:518px;top:724px;width:1px;height:19px;background:#8c8c8c"></div><div class="a" style="left:519px;top:724px;width:1px;height:19px;background:#fff"></div>
<svg class="a" style="left:525px;top:725px" width="16" height="16" viewBox="0 0 16 16" ><path d="M13 6 A6 6 0 1 0 12.5 11" fill="none" stroke="#4a5ae0" stroke-width="2.4"/><path d="M10 5 H16 V0Z" fill="#4a5ae0"/></svg>
<svg class="a" style="left:548px;top:732px" width="5" height="3" viewBox="0 0 5 3" ><path d="M0 0H5L2.5 3Z" fill="#000"/></svg>
<svg class="a" style="left:559px;top:725px" width="16" height="16" viewBox="0 0 16 16" ><rect x="0.5" y="2.5" width="15" height="12" fill="#fff" stroke="#c8c8d0"/><path d="M1 0V16" stroke="#20c020" stroke-width="1.5"/><rect x="2.5" y="5.5" width="4" height="6" fill="#c8d0f8" stroke="#5838c0"/><path d="M14 8.5H9M11 6.5 L9 8.5 L11 10.5" fill="none" stroke="#e02020" stroke-width="1"/></svg>
<svg class="a" style="left:583px;top:732px" width="5" height="3" viewBox="0 0 5 3" ><path d="M0 0H5L2.5 3Z" fill="#000"/></svg>
<svg class="a" style="left:594px;top:725px" width="16" height="16" viewBox="0 0 16 16" ><rect x="7.5" y="0.5" width="8" height="8" fill="#4a4ad0" stroke="#000"/><rect x="0.5" y="8" width="8" height="8" fill="#4a4ad0" stroke="#000"/><rect x="3.5" y="3.5" width="9" height="9" fill="#f8e060" stroke="#000"/></svg>
<svg class="a" style="left:617px;top:732px" width="5" height="3" viewBox="0 0 5 3" ><path d="M0 0H5L2.5 3Z" fill="#000"/></svg>
<div class="a" style="left:628px;top:724px;width:1px;height:19px;background:#8c8c8c"></div><div class="a" style="left:629px;top:724px;width:1px;height:19px;background:#fff"></div>
<svg class="a" style="left:636px;top:725px" width="16" height="16" viewBox="0 0 16 16" ><rect x="2" y="0" width="6" height="6" fill="#8a8a8a"/><rect x="9" y="7" width="6" height="6" fill="#c8c8c8" stroke="#9a9a9a"/><path d="M3 8 L6 11 L3 14" fill="none" stroke="#9a9a9a" stroke-width="1.3"/></svg>
<div class="chev" style="left:662px;top:722px;width:10px;height:23px"></div>
<svg class="a" style="left:664px;top:739px" width="5" height="3" viewBox="0 0 5 3" ><path d="M0 0H5L2.5 3Z" fill="#000"/></svg>
<div class="a" style="left:0px;top:748px;width:1024px;height:20px;background:#c0c0c0;border-top:1px solid #fff"></div>
<div class="sunk" style="left:5px;top:751px;width:354px;height:17px"></div>
<div class="sunk" style="left:363px;top:751px;width:211px;height:17px"></div>
<div class="sunk" style="left:578px;top:751px;width:39px;height:17px"></div>
<div class="sunk" style="left:621px;top:751px;width:17px;height:17px"></div>
<div class="sunk" style="left:642px;top:751px;width:20px;height:17px"></div>
<div class="sunk" style="left:665px;top:751px;width:127px;height:17px"></div>
<div class="sunk" style="left:795px;top:751px;width:226px;height:17px"></div>
<svg class="a" style="left:370px;top:753px" width="15" height="12" viewBox="0 0 15 12" shape-rendering="crispEdges"><g fill="#0000e0"><rect x="3" y="0" width="1" height="3"/><rect x="3" y="4" width="1" height="1"/><rect x="3" y="6" width="1" height="3"/><rect x="0" y="4" width="2" height="1"/><rect x="5" y="4" width="3" height="1"/></g><g fill="#000"><rect x="9" y="4" width="1" height="1"/><rect x="11" y="4" width="1" height="1"/><rect x="13" y="4" width="1" height="1"/><rect x="13" y="6" width="1" height="1"/><rect x="13" y="8" width="1" height="1"/><rect x="3" y="10" width="1" height="1"/><rect x="5" y="10" width="1" height="1"/><rect x="7" y="10" width="1" height="1"/><rect x="9" y="10" width="1" height="1"/><rect x="11" y="10" width="1" height="1"/><rect x="13" y="10" width="1" height="1"/></g></svg>
<div class="t" style="left:391px;top:753px;">4.36 / 7.98</div>
<svg class="a" style="left:474px;top:753px" width="15" height="12" viewBox="0 0 15 12" shape-rendering="crispEdges"><g fill="#000"><rect x="6" y="4" width="1" height="1"/><rect x="8" y="4" width="1" height="1"/><rect x="10" y="4" width="1" height="1"/><rect x="12" y="4" width="1" height="1"/><rect x="14" y="4" width="1" height="1"/><rect x="6" y="6" width="1" height="1"/><rect x="14" y="6" width="1" height="1"/><rect x="6" y="8" width="1" height="1"/><rect x="14" y="8" width="1" height="1"/><rect x="6" y="10" width="1" height="1"/><rect x="8" y="10" width="1" height="1"/><rect x="10" y="10" width="1" height="1"/><rect x="12" y="10" width="1" height="1"/><rect x="14" y="10" width="1" height="1"/><rect x="6" y="0" width="1" height="3"/><rect x="7" y="1" width="1" height="1"/><rect x="8" y="0" width="1" height="1"/><rect x="8" y="2" width="1" height="1"/><rect x="14" y="0" width="1" height="3"/><rect x="13" y="1" width="1" height="1"/><rect x="12" y="0" width="1" height="1"/><rect x="12" y="2" width="1" height="1"/><rect x="1" y="5" width="2" height="1"/><rect x="1" y="6" width="1" height="1"/><rect x="2" y="7" width="1" height="1"/><rect x="2" y="9" width="1" height="1"/><rect x="1" y="10" width="2" height="1"/></g></svg>
<div class="t" style="left:495px;top:753px;">0.00 x 0.00</div>
<div class="t" style="left:587px;top:753px;">53%</div>
<div class="t" style="left:627px;top:752px;font-size:10px">*</div>
<div class="t" style="left:670px;top:753px;">Slide 1 / 1</div>
<div class="t" style="left:802px;top:753px;">Default</div>
<div class="a" style="left:25px;top:350px;width:463px;height:328px;background:#c0c0c0;border:1px solid;border-color:#d4d0c8 #000 #000 #d4d0c8;box-shadow:inset 1px 1px 0 #fff,inset -1px -1px 0 #808080"></div>
<div class="a" style="left:29px;top:354px;width:455px;height:18px;background:linear-gradient(90deg,#0a246a,#1084d0)"></div>
<svg class="a" style="left:31px;top:355px" width="16" height="16" viewBox="0 0 16 16" ><path d="M6.5 2.5 H13 L15.5 5.5 V16.5 H6.5Z" fill="#fafafa" stroke="#8a8a8a" stroke-width="1"/>
<rect x="1" y="9" width="5.5" height="8" rx="1" fill="#2a4858"/><rect x="2" y="1" width="4.5" height="4.5" fill="#2a4858"/>
<path d="M0.5 9 Q3 6.5 7 6.5 L9 5 L14 5.5" fill="none" stroke="#9a9a9a" stroke-width="1"/><path d="M4 5 L9 3.5 L12 4.5" fill="none" stroke="#fff" stroke-width="1.4"/>
<path d="M7.8 10.5 Q8.6 8.5 10.8 8.7 Q13.2 9.3 11.6 12 L9.6 14.8 H14.2" fill="none" stroke="#f8b000" stroke-width="2.3" stroke-linejoin="round"/></svg>
<div class="t" style="left:50px;top:357px;font-weight:bold;color:#fff;font-size:12px">featherston-sample-q1110025.jpg - OpenOffice.org Draw</div>
<div class="btn" style="left:432px;top:356px;width:16px;height:14px"></div>
<div class="btn" style="left:448px;top:356px;width:16px;height:14px"></div>
<div class="btn" style="left:466px;top:356px;width:16px;height:14px"></div>
<svg class="a" style="left:436px;top:358px" width="9" height="9" viewBox="0 0 9 9" ><rect x="1" y="6" width="6" height="2" fill="#000"/></svg>
<svg class="a" style="left:451px;top:358px" width="10" height="9" viewBox="0 0 10 9" ><rect x="1.5" y="0.5" width="7" height="7" fill="none" stroke="#000"/><rect x="1" y="0" width="8" height="2" fill="#000"/></svg>
<svg class="a" style="left:469px;top:358px" width="10" height="9" viewBox="0 0 10 9" ><path d="M1.5 1 L8.5 8 M8.5 1 L1.5 8" stroke="#000" stroke-width="1.5"/></svg>
<div class="a" style="left:29px;top:372px;width:455px;height:75px;background:linear-gradient(90deg,#c8c8c8,#d9d9d9)"></div>
<div class="t" style="left:35px;top:377px;font-size:11px"><u>F</u>ile</div>
<div class="t" style="left:63px;top:377px;font-size:11px"><u>E</u>dit</div>
<div class="t" style="left:93px;top:377px;font-size:11px"><u>V</u>iew</div>
<div class="t" style="left:128px;top:377px;font-size:11px"><u>I</u>nsert</div>
<div class="t" style="left:166px;top:377px;font-size:11px">F<u>o</u>rmat</div>
<div class="t" style="left:210px;top:377px;font-size:11px"><u>T</u>ools</div>
<div class="t" style="left:248px;top:377px;font-size:11px"><u>M</u>odify</div>
<div class="t" style="left:291px;top:377px;font-size:11px"><u>W</u>indow</div>
<div class="t" style="left:342px;top:377px;font-size:11px"><u>H</u>elp</div>
<div class="tb" style="left:29px;top:392px;width:455px;height:27px"></div>
<svg class="a" style="left:33px;top:397px" width="3" height="19" viewBox="0 0 3 19" shape-rendering="crispEdges"><rect x="1" y="1" width="2" height="2" fill="#fff"/><rect x="0" y="0" width="2" height="2" fill="#202020"/><rect x="1" y="5" width="2" height="2" fill="#fff"/><rect x="0" y="4" width="2" height="2" fill="#202020"/><rect x="1" y="9" width="2" height="2" fill="#fff"/><rect x="0" y="8" width="2" height="2" fill="#202020"/><rect x="1" y="13" width="2" height="2" fill="#fff"/><rect x="0" y="12" width="2" height="2" fill="#202020"/><rect x="1" y="17" width="2" height="2" fill="#fff"/><rect x="0" y="16" width="2" height="2" fill="#202020"/></svg>
<svg class="a" style="left:44px;top:396px" width="17" height="18" viewBox="0 0 17 18" ><path d="M6.5 2.5 H13 L15.5 5.5 V16.5 H6.5Z" fill="#fafafa" stroke="#8a8a8a" stroke-width="1"/>
<rect x="1" y="9" width="5.5" height="8" rx="1" fill="#2a4858"/><rect x="2" y="1" width="4.5" height="4.5" fill="#2a4858"/>
<path d="M0.5 9 Q3 6.5 7 6.5 L9 5 L14 5.5" fill="none" stroke="#9a9a9a" stroke-width="1"/><path d="M4 5 L9 3.5 L12 4.5" fill="none" stroke="#fff" stroke-width="1.4"/>
<path d="M7.8 10.5 Q8.6 8.5 10.8 8.7 Q13.2 9.3 11.6 12 L9.6 14.8 H14.2" fill="none" stroke="#f8b000" stroke-width="2.3" stroke-linejoin="round"/></svg>
<svg class="a" style="left:66px;top:403px" width="5" height="3" viewBox="0 0 5 3" ><path d="M0 0H5L2.5 3Z" fill="#000"/></svg>
<svg class="a" style="left:78px;top:398px" width="17" height="15" viewBox="0 0 17 15" ><path d="M1.5 13.5 V5.5 Q1.5 4 3 4 H5 L6.5 5.5 H11.5 V8" fill="#faf4b0" stroke="#6a6a60" stroke-width="1"/>
<path d="M1.5 13.5 L5 8.5 H16.5 L12.5 13.5Z" fill="#f2ea40" stroke="#5a5a50" stroke-width="1"/>
<path d="M10 3 Q12 0.5 14.5 2" fill="none" stroke="#e02020" stroke-width="1.2" stroke-dasharray="1.5 .8"/><path d="M13.5 1 L16 3.5 L13 4.5Z" fill="#e02020"/></svg>
<div class="a" style="left:102px;top:398px;width:14px;height:14px;background:#8a8a8a;border:1px solid #6a6a6a"></div>
<svg class="a" style="left:124px;top:400px" width="17" height="10" viewBox="0 0 17 10" ><rect x="3.5" y="0.5" width="12" height="8" fill="#f8f4c8" stroke="#6a6a70"/><path d="M3.5 0.5 L9.5 5.5 L15.5 0.5 M3.5 8.5 L7.5 4.5 M15.5 8.5 L11.5 4.5" fill="none" stroke="#8a8a70" stroke-width=".8"/>
<path d="M0 2.5H3M0 4.5H3M0 6.5H3" stroke="#20e020" stroke-width="1"/></svg>
<div class="a" style="left:147px;top:396px;width:1px;height:19px;background:#8c8c8c"></div><div class="a" style="left:148px;top:396px;width:1px;height:19px;background:#fff"></div>
<div class="a" style="left:152px;top:394px;width:23px;height:23px;background:#b6b6d2;border:1px solid #0a0a80"></div>
<svg class="a" style="left:153px;top:395px" width="20" height="20" viewBox="0 0 20 20" ><path d="M2.5 1.5 H11 L15 5.5 V18.5 H2.5Z" fill="#fff" stroke="#58587a" stroke-width="1"/><path d="M11 1.5 V5.5 H15" fill="#dde" stroke="#58587a"/>
<path d="M4 9.5H9M4 11.5H8M4 13.5H7" stroke="#5050e0" stroke-width="1"/>
<path d="M8 15 L16 6 L18 8 L10 17 L7 18Z" fill="#30c040" stroke="#202020" stroke-width=".8"/></svg>
<div class="a" style="left:178px;top:396px;width:1px;height:19px;background:#8c8c8c"></div><div class="a" style="left:179px;top:396px;width:1px;height:19px;background:#fff"></div>
<svg class="a" style="left:187px;top:397px" width="14" height="16" viewBox="0 0 14 16" ><path d="M0.5 0.5 H10 L13.5 4 V15.5 H0.5Z" fill="#fff" stroke="#7a7aa0"/><path d="M10 0.5 L13.5 4 H10Z" fill="#e02020"/>
<path d="M2 3.5H8M2 5.5H10M2 7.5H10" stroke="#5a5ae8"/><rect x="0.5" y="10" width="13" height="5.5" fill="#e02020"/>
<text x="7" y="14.7" font-size="5" font-family="Liberation Sans" font-weight="bold" fill="#fff" text-anchor="middle">PDF</text></svg>
<svg class="a" style="left:209px;top:399px" width="16" height="13" viewBox="0 0 16 13" ><path d="M4 0.5 H14 L12 5 H2Z" fill="#fff" stroke="#555"/><path d="M5 2.5H11" stroke="#5a5ae8" stroke-width="1"/>
<path d="M1 5 H15.5 V12.5 H0.5 V6Z" fill="#d0d0d8" stroke="#333"/><rect x="1" y="9" width="14" height="3" fill="#8a8a98"/><rect x="7" y="7" width="2" height="1.5" fill="#20c020"/></svg>
<div class="a" style="left:232px;top:396px;width:1px;height:19px;background:#8c8c8c"></div><div class="a" style="left:233px;top:396px;width:1px;height:19px;background:#fff"></div>
<svg class="a" style="left:239px;top:398px" width="17" height="15" viewBox="0 0 17 15" ><text x="8" y="6" font-size="6.5" font-family="Liberation Sans" font-weight="bold" fill="#000" text-anchor="middle">ABC</text>
<path d="M3 9 L7 13.5 L15 5" fill="none" stroke="#5a5ae0" stroke-width="2.4"/></svg>
<div class="a" style="left:260px;top:394px;width:23px;height:23px;background:#b6b6d2;border:1px solid #0a0a80"></div>
<svg class="a" style="left:263px;top:399px" width="16" height="14" viewBox="0 0 16 14" ><text x="8" y="8" font-size="6.5" font-family="Liberation Sans" font-weight="bold" fill="#000" text-anchor="middle">ABC</text>
<path d="M1 12 Q3 9.5 5 11.5 T9 11.5 T13 11.5 T15 11" fill="none" stroke="#e02020" stroke-width="1.1"/></svg>
<div class="a" style="left:286px;top:396px;width:1px;height:19px;background:#8c8c8c"></div><div class="a" style="left:287px;top:396px;width:1px;height:19px;background:#fff"></div>
<svg class="a" style="left:296px;top:397px" width="13" height="17" viewBox="0 0 13 17" ><path d="M2.5 2 L9.5 12 M10.5 2.5 L3.5 12" stroke="#7a7a7a" stroke-width="3.6" stroke-linecap="round"/>
<circle cx="3" cy="13" r="2.8" fill="#7a7a7a"/><circle cx="10" cy="13" r="2.8" fill="#7a7a7a"/>
<circle cx="3.5" cy="4.5" r=".7" fill="#fff"/><circle cx="9.5" cy="4.5" r=".7" fill="#fff"/><circle cx="2.5" cy="12.5" r=".7" fill="#fff"/><circle cx="8.5" cy="12.5" r=".7" fill="#fff"/></svg>
<svg class="a" style="left:317px;top:397px" width="17" height="17" viewBox="0 0 17 17" ><path d="M0.5 0.5 H6.5 L9.5 3.5 V11.5 H0.5Z" fill="#fafafa" stroke="#7a7a7a"/><path d="M2 5.5H4M2 7.5H6M2 9.5H6" stroke="#7a7a7a" stroke-width="1"/>
<path d="M7.5 5.5 H13.5 L16.5 8.5 V16.5 H7.5Z" fill="#fafafa" stroke="#7a7a7a"/><path d="M9 10.5H11M9 12.5H14M9 14.5H14" stroke="#7a7a7a" stroke-width="1"/></svg>
<svg class="a" style="left:340px;top:397px" width="16" height="17" viewBox="0 0 16 17" ><rect x="0.5" y="2.5" width="11" height="11" fill="#d8b860" stroke="#5a4a20"/><rect x="3" y="0.5" width="6" height="3" fill="#fff" stroke="#333"/>
<path d="M6.5 6.5 H12.5 L15.5 9.5 V16.5 H6.5Z" fill="#fff" stroke="#555"/><path d="M8 10.5H13M8 12.5H13M8 14.5H12" stroke="#5a5ae8" stroke-width="1"/></svg>
<svg class="a" style="left:362px;top:403px" width="5" height="3" viewBox="0 0 5 3" ><path d="M0 0H5L2.5 3Z" fill="#000"/></svg>
<svg class="a" style="left:374px;top:398px" width="16" height="16" viewBox="0 0 16 16" ><path d="M16 0 L12 4 L6 6 L1 10 L3 14 L8 15 L13 10 L15 4Z" fill="#8a8a8a"/></svg>
<div class="a" style="left:397px;top:396px;width:1px;height:19px;background:#8c8c8c"></div><div class="a" style="left:398px;top:396px;width:1px;height:19px;background:#fff"></div>
<svg class="a" style="left:405px;top:398px" width="16" height="16" viewBox="0 0 16 16" ><path d="M5 1 L0.5 6 L5 11 V8 H10 Q13 8 13 11 Q13 14 9 14 L8 14 Q15.5 16 15.5 10 Q15.5 4 10 4 H5Z" fill="#8a8a8a" stroke="#8a8a8a" stroke-width=".5"/></svg>
<svg class="a" style="left:428px;top:403px" width="5" height="3" viewBox="0 0 5 3" ><path d="M0 0H5L2.5 3Z" fill="#8a8a8a"/></svg>
<div class="chev" style="left:472px;top:395px;width:10px;height:21px"></div>
<svg class="a" style="left:474px;top:410px" width="5" height="3" viewBox="0 0 5 3" ><path d="M0 0H5L2.5 3Z" fill="#000"/></svg>
<svg class="a" style="left:473px;top:397px" width="9" height="6" viewBox="0 0 9 6" ><path d="M1 0.5 L4 3 L1 5.5 M5 0.5 L8 3 L5 5.5" fill="none" stroke="#000" stroke-width="1.3"/></svg>
<div class="tb" style="left:29px;top:419px;width:455px;height:27px"></div>
<svg class="a" style="left:33px;top:424px" width="3" height="19" viewBox="0 0 3 19" shape-rendering="crispEdges"><rect x="1" y="1" width="2" height="2" fill="#fff"/><rect x="0" y="0" width="2" height="2" fill="#202020"/><rect x="1" y="5" width="2" height="2" fill="#fff"/><rect x="0" y="4" width="2" height="2" fill="#202020"/><rect x="1" y="9" width="2" height="2" fill="#fff"/><rect x="0" y="8" width="2" height="2" fill="#202020"/><rect x="1" y="13" width="2" height="2" fill="#fff"/><rect x="0" y="12" width="2" height="2" fill="#202020"/><rect x="1" y="17" width="2" height="2" fill="#fff"/><rect x="0" y="16" width="2" height="2" fill="#202020"/></svg>
<svg class="a" style="left:44px;top:424px" width="16" height="16" viewBox="0 0 16 16" ><path d="M2.5 0.5 H15.5 V12 L12 15.5 H2.5Z" fill="#fff" stroke="#7a7a90"/><path d="M12 15.5 V12 H15.5" fill="#e0e0e8" stroke="#7a7a90"/>
<path d="M3 8 V13 Q3 16 6 16 H9 Q10 14 10 12 V10 H7 V6 Q6 5 5 6 V10 Q3 9 3 8Z" fill="#f8d8a0" stroke="#805020" stroke-width=".7"/></svg>
<div class="a" style="left:67px;top:423px;width:1px;height:19px;background:#8c8c8c"></div><div class="a" style="left:68px;top:423px;width:1px;height:19px;background:#fff"></div>
<svg class="a" style="left:79px;top:424px" width="10" height="16" viewBox="0 0 10 16" ><path d="M5 0 L9 7 Q9 11 7 13 H3 Q1 11 1 7Z" fill="#f8d020" stroke="#806000" stroke-width=".7"/><path d="M5 3 V8" stroke="#604000" stroke-width=".8"/>
<rect x="0.5" y="13" width="8" height="3" fill="#5a62e8"/></svg>
<svg class="a" style="left:98px;top:426px" width="16" height="13" viewBox="0 0 16 13" ><path d="M16 3H2M5 0 L1 3 L5 6" fill="none" stroke="#5838c0" stroke-width="1.4"/><path d="M0 10H16M13 7 L10 10 L13 13 M16 7 L13 10 L16 13" fill="none" stroke="#5838c0" stroke-width="1.4"/></svg>
<svg class="a" style="left:120px;top:431px" width="5" height="3" viewBox="0 0 5 3" ><path d="M0 0H5L2.5 3Z" fill="#000"/></svg>
<div class="fld" style="left:137px;top:422px;width:77px;height:20px"></div>
<div class="cb" style="left:197px;top:424px;width:15px;height:16px"></div>
<div class="arr" style="left:201px;top:430px"></div>
<div class="a" style="left:140px;top:432px;width:56px;height:1px;background:#000"></div>
<div class="fld" style="left:223px;top:422px;width:62px;height:20px"></div>
<div class="t" style="left:227px;top:427px;font-size:12px">0.00"</div>
<div class="cb" style="left:269px;top:424px;width:14px;height:8px"></div>
<div class="cb" style="left:269px;top:432px;width:14px;height:8px"></div>
<svg class="a" style="left:274px;top:426px" width="5" height="3" viewBox="0 0 5 3" ><path d="M0 3H5L2.5 0Z" fill="#000"/></svg>
<svg class="a" style="left:274px;top:435px" width="5" height="3" viewBox="0 0 5 3" ><path d="M0 0H5L2.5 3Z" fill="#000"/></svg>
<div class="fld" style="left:294px;top:422px;width:87px;height:20px"></div>
<div class="cb" style="left:364px;top:424px;width:15px;height:16px"></div>
<div class="arr" style="left:368px;top:430px"></div>
<div class="a" style="left:298px;top:427px;width:16px;height:11px;background:#000"></div>
<div class="t" style="left:319px;top:427px;font-size:12px">Black</div>
<svg class="a" style="left:393px;top:424px" width="16" height="17" viewBox="0 0 16 17" ><defs><linearGradient id="bk" x1="0" y1="0" x2="1" y2="1"><stop offset="0.2" stop-color="#fff"/><stop offset="1" stop-color="#6a6a80"/></linearGradient></defs>
<path d="M10.5 3 L15.5 6 V16 H13.8 V9.5Z" fill="#6a6af8"/>
<path d="M0.7 8.5 L7 2 L13.3 8.3 L6.7 14.8Z" fill="url(#bk)" stroke="#000" stroke-width="1.2"/>
<path d="M4.5 4.5 V2.5 Q5 0.5 6.5 0.5 Q7.5 0.5 8 2" fill="none" stroke="#000" stroke-width="1.1"/><path d="M7.5 1.5 V6" stroke="#000" stroke-width="1.1"/></svg>
<div class="chev" style="left:472px;top:422px;width:10px;height:21px"></div>
<svg class="a" style="left:474px;top:437px" width="5" height="3" viewBox="0 0 5 3" ><path d="M0 0H5L2.5 3Z" fill="#000"/></svg>
<svg class="a" style="left:473px;top:424px" width="9" height="6" viewBox="0 0 9 6" ><path d="M1 0.5 L4 3 L1 5.5 M5 0.5 L8 3 L5 5.5" fill="none" stroke="#000" stroke-width="1.3"/></svg>
<div class="a" style="left:29px;top:446px;width:203px;height:180px;background:#c0c0c0;border-top:1px solid #fff"></div>
<div class="t" style="left:35px;top:451px;font-weight:bold;font-size:12px;line-height:14px">Pages</div>
<svg class="a" style="left:214px;top:453px" width="9" height="9" viewBox="0 0 9 9" ><path d="M1 1 L8 8 M8 1 L1 8" stroke="#4a3c5a" stroke-width="2"/></svg>
<div class="a" style="left:33px;top:467px;width:192px;height:155px;background:#fff;border:1px solid;border-color:#808080 #fff #fff #808080"></div>
<div class="a" style="left:34px;top:468px;width:173px;height:153px;overflow:hidden"><div class="a" style="left:16px;top:15px;width:152px;height:200px;border:3px solid #000080;border-radius:4px;background:#fff"></div>
<svg class="a" style="left:24px;top:62px" width="136" height="100"><rect width="136" height="100" fill="#9ea020"/><rect width="136" height="100" fill="url(#herr)"/><rect width="136" height="100" filter="url(#olivetex)"/></svg></div>
<div class="t" style="left:38px;top:488px;font-size:12px">1</div>
<div class="a" style="left:208px;top:468px;width:16px;height:153px;background:#c8c8c8"></div>
<div class="btn" style="left:208px;top:468px;width:16px;height:16px"></div>
<svg class="a" style="left:212px;top:473px" width="9" height="5" viewBox="0 0 9 5" ><path d="M1 5H9L5 1Z" fill="#fff"/><path d="M0 4H8L4 0Z" fill="#808080"/></svg>
<div class="btn" style="left:208px;top:484px;width:16px;height:76px"></div>
<div class="btn" style="left:208px;top:606px;width:16px;height:16px"></div>
<svg class="a" style="left:212px;top:612px" width="8" height="4" viewBox="0 0 8 4" ><path d="M0 0H8L4 4Z" fill="#000"/></svg>
<svg class="a" style="left:226px;top:518px" width="5" height="34" viewBox="0 0 5 34" shape-rendering="crispEdges"><path d="M2.5 0 L4.5 3 H0.5Z M2.5 34 L4.5 31 H0.5Z" fill="#000"/><g fill="#000"><rect x="1" y="6" width="1" height="1"/><rect x="3" y="7" width="1" height="1"/><rect x="1" y="8" width="1" height="1"/><rect x="3" y="9" width="1" height="1"/><rect x="1" y="10" width="1" height="1"/><rect x="3" y="11" width="1" height="1"/><rect x="1" y="12" width="1" height="1"/><rect x="3" y="13" width="1" height="1"/><rect x="1" y="14" width="1" height="1"/><rect x="3" y="15" width="1" height="1"/><rect x="1" y="16" width="1" height="1"/><rect x="3" y="17" width="1" height="1"/><rect x="1" y="18" width="1" height="1"/><rect x="3" y="19" width="1" height="1"/><rect x="1" y="20" width="1" height="1"/><rect x="3" y="21" width="1" height="1"/><rect x="1" y="22" width="1" height="1"/><rect x="3" y="23" width="1" height="1"/><rect x="1" y="24" width="1" height="1"/><rect x="3" y="25" width="1" height="1"/></g></svg>
<div class="a" style="left:232px;top:447px;width:252px;height:179px;background:#c0c0c0;border-left:1px solid #000;border-top:1px solid #000"></div>
<div class="a" style="left:236px;top:451px;width:16px;height:16px;border:1px solid;border-color:#fff #808080 #808080 #fff"></div>
<div class="a" style="left:243px;top:454px;width:1px;height:11px;background:#000"></div>
<div class="a" style="left:239px;top:457px;width:10px;height:1px;background:#000"></div>
<div class="a" style="left:252px;top:451px;width:215px;height:16px;background:#c0c0c0;border-top:1px solid #808080;border-bottom:1px solid #808080"></div>
<div class="a" style="left:311px;top:452px;width:96px;height:14px;background:#fff"></div>
<div class="t" style="left:262px;top:454px;font-size:12px">4</div>
<div class="t" style="left:285px;top:454px;font-size:12px">2</div>
<div class="t" style="left:331px;top:454px;font-size:12px">2</div>
<div class="t" style="left:354px;top:454px;font-size:12px">4</div>
<div class="t" style="left:377px;top:454px;font-size:12px">6</div>
<div class="t" style="left:400px;top:454px;font-size:12px">8</div>
<div class="t" style="left:420px;top:454px;font-size:12px">10</div>
<div class="t" style="left:443px;top:454px;font-size:12px">12</div>
<div class="a" style="left:236px;top:472px;width:16px;height:136px;background:#c0c0c0;border-left:1px solid #808080;border-right:1px solid #808080"></div>
<div class="a" style="left:237px;top:472px;width:14px;height:131px;background:#fff"></div>
<div class="a" style="left:236px;top:480px;width:21px;height:1px;background:#000"></div>
<svg class="a" style="left:237px;top:473px" width="14" height="6" viewBox="0 0 14 6" ><path d="M1.5 0V4.5H12.5V0" fill="none" stroke="#a0a0a0"/></svg>
<svg class="a" style="left:236px;top:472px" width="16" height="136"><text transform="translate(12,25) rotate(-90)" font-size="12" font-family="Liberation Sans" text-anchor="middle">2</text><text transform="translate(12,49) rotate(-90)" font-size="12" font-family="Liberation Sans" text-anchor="middle">4</text><text transform="translate(12,72) rotate(-90)" font-size="12" font-family="Liberation Sans" text-anchor="middle">6</text><text transform="translate(12,95) rotate(-90)" font-size="12" font-family="Liberation Sans" text-anchor="middle">8</text><text transform="translate(12,118) rotate(-90)" font-size="12" font-family="Liberation Sans" text-anchor="middle">10</text></svg>
<div class="a" style="left:257px;top:472px;width:209px;height:136px;background:#fff;border-left:1px solid #000;border-top:1px solid #000"></div>
<div class="a" style="left:310px;top:475px;width:100px;height:129px;border:1px solid #000;border-right-width:2px;border-bottom-width:2px;background:#fff"></div>
<svg class="a" style="left:313px;top:504px" width="92" height="69"><rect width="92" height="69" fill="#9ea020"/><rect width="92" height="69" fill="url(#herr)"/><rect width="92" height="69" filter="url(#olivetex)"/></svg>
<div class="a" style="left:466px;top:448px;width:16px;height:160px;background:#c8c8c8"></div>
<div class="btn" style="left:466px;top:448px;width:16px;height:16px"></div>
<svg class="a" style="left:470px;top:453px" width="8" height="4" viewBox="0 0 8 4" ><path d="M0 4H8L4 0Z" fill="#000"/></svg>
<div class="btn" style="left:466px;top:497px;width:16px;height:65px"></div>
<div class="btn" style="left:466px;top:592px;width:16px;height:16px"></div>
<svg class="a" style="left:470px;top:598px" width="8" height="4" viewBox="0 0 8 4" ><path d="M0 0H8L4 4Z" fill="#000"/></svg>
<div class="a" style="left:233px;top:608px;width:251px;height:16px;background:#c0c0c0;border-bottom:1px solid #000"></div>
<div class="btn" style="left:234px;top:608px;width:16px;height:15px"></div>
<div class="btn" style="left:250px;top:608px;width:16px;height:15px"></div>
<div class="btn" style="left:266px;top:608px;width:16px;height:15px"></div>
<div class="btn" style="left:282px;top:608px;width:16px;height:15px"></div>
<svg class="a" style="left:234px;top:608px" width="64" height="15" viewBox="0 0 64 15" ><g fill="#808080"><rect x="5" y="4" width="1" height="7"/><path d="M10 4 L7 7.5 L10 11Z"/><path d="M26 4 L23 7.5 L26 11Z"/><path d="M38 4 L41 7.5 L38 11Z"/><path d="M54 4 L57 7.5 L54 11Z"/><rect x="58" y="4" width="1" height="7"/></g></svg>
<svg class="a" style="left:294px;top:607px" width="190" height="18">
 <path d="M54.5 1.5 H114.5 L108.5 16 H49.5Z" fill="#c0c0c0" stroke="#000"/>
 <path d="M114.5 1.5 H213.5 L207.5 16 H108.5Z" fill="#c0c0c0" stroke="#000"/>
 <path d="M4.5 1 H60 L54 16 H10.5Z" fill="#fff" stroke="#000"/>
 <rect x="0" y="16" width="190" height="1" fill="#000"/>
</svg>
<div class="a" style="left:294px;top:607px;width:190px;height:18px;overflow:hidden"><div class="t" style="left:13px;top:2px;font-weight:bold;font-size:11px">Layout</div>
<div class="t" style="left:64px;top:2px;font-size:11px">Controls</div>
<div class="t" style="left:122px;top:2px;font-size:11px">Dimension Lines</div>
</div>
<div class="a" style="left:29px;top:625px;width:455px;height:28px;background:linear-gradient(90deg,#c8c8c8,#d9d9d9)"></div>
<div class="tb" style="left:29px;top:625px;width:455px;height:27px"></div>
<svg class="a" style="left:33px;top:630px" width="3" height="19" viewBox="0 0 3 19" shape-rendering="crispEdges"><rect x="1" y="1" width="2" height="2" fill="#fff"/><rect x="0" y="0" width="2" height="2" fill="#202020"/><rect x="1" y="5" width="2" height="2" fill="#fff"/><rect x="0" y="4" width="2" height="2" fill="#202020"/><rect x="1" y="9" width="2" height="2" fill="#fff"/><rect x="0" y="8" width="2" height="2" fill="#202020"/><rect x="1" y="13" width="2" height="2" fill="#fff"/><rect x="0" y="12" width="2" height="2" fill="#202020"/><rect x="1" y="17" width="2" height="2" fill="#fff"/><rect x="0" y="16" width="2" height="2" fill="#202020"/></svg>
<div class="a" style="left:41px;top:628px;width:23px;height:23px;background:#b6b6d2;border:1px solid #0a0a80"></div>
<svg class="a" style="left:45px;top:631px" width="12" height="17" viewBox="0 0 12 17" ><path d="M2 1 V14 L5 11 L8 16 L10 15 L7.5 10 H11.5Z" fill="#fff" stroke="#000" stroke-width="1"/></svg>
<div class="a" style="left:67px;top:630px;width:1px;height:19px;background:#8c8c8c"></div><div class="a" style="left:68px;top:630px;width:1px;height:19px;background:#fff"></div>
<svg class="a" style="left:75px;top:631px" width="16" height="16" viewBox="0 0 16 16" ><path d="M1 15 L15 1" stroke="#5838c0" stroke-width="1.2"/></svg>
<svg class="a" style="left:98px;top:632px" width="16" height="15" viewBox="0 0 16 15" ><rect x="0.5" y="2.5" width="15" height="10" fill="#8a9af0" stroke="#5838c0"/></svg>
<svg class="a" style="left:121px;top:632px" width="16" height="15" viewBox="0 0 16 15" ><ellipse cx="8" cy="7.5" rx="7.5" ry="5" fill="#8a9af0" stroke="#5838c0"/></svg>
<svg class="a" style="left:145px;top:630px" width="16" height="17" viewBox="0 0 16 17" ><text x="8" y="15" font-size="19" font-family="Liberation Serif" font-weight="bold" fill="#5838c0" text-anchor="middle">T</text></svg>
<div class="a" style="left:167px;top:630px;width:1px;height:19px;background:#8c8c8c"></div><div class="a" style="left:168px;top:630px;width:1px;height:19px;background:#fff"></div>
<svg class="a" style="left:175px;top:631px" width="16" height="16" viewBox="0 0 16 16" ><path d="M0 11 Q3 7 5 11 Q7 15 9 12 Q11 9 15 13" fill="none" stroke="#5838c0" stroke-width="1"/><path d="M7 11 L14 3 L16 5 L9 13 L6.5 14Z" fill="#f8d020" stroke="#000" stroke-width=".8"/></svg>
<svg class="a" style="left:198px;top:637px" width="5" height="3" viewBox="0 0 5 3" ><path d="M0 0H5L2.5 3Z" fill="#000"/></svg>
<svg class="a" style="left:209px;top:631px" width="16" height="16" viewBox="0 0 16 16" ><path d="M3 3 L8 6 V10 L13 13" fill="none" stroke="#5838c0" stroke-width="1.4"/><circle cx="3" cy="3" r="2.3" fill="#5838c0"/><circle cx="13" cy="13" r="2.5" fill="#5838c0"/></svg>
<svg class="a" style="left:232px;top:637px" width="5" height="3" viewBox="0 0 5 3" ><path d="M0 0H5L2.5 3Z" fill="#000"/></svg>
<svg class="a" style="left:243px;top:631px" width="16" height="16" viewBox="0 0 16 16" ><path d="M8 1 L15 8 L8 15 L1 8Z" fill="none" stroke="#5838c0" stroke-width="1.2"/></svg>
<svg class="a" style="left:266px;top:637px" width="5" height="3" viewBox="0 0 5 3" ><path d="M0 0H5L2.5 3Z" fill="#000"/></svg>
<svg class="a" style="left:277px;top:631px" width="16" height="16" viewBox="0 0 16 16" ><circle cx="8" cy="8" r="7.3" fill="none" stroke="#5838c0" stroke-width="1.2"/><circle cx="5.5" cy="6" r="1" fill="#5838c0"/><circle cx="10.5" cy="6" r="1" fill="#5838c0"/><path d="M4 9.5 Q8 13.5 12 9.5" fill="none" stroke="#5838c0" stroke-width="1.1"/></svg>
<svg class="a" style="left:300px;top:637px" width="5" height="3" viewBox="0 0 5 3" ><path d="M0 0H5L2.5 3Z" fill="#000"/></svg>
<svg class="a" style="left:311px;top:631px" width="16" height="16" viewBox="0 0 16 16" ><path d="M0.5 8 L5 3.5 V6 H11 V3.5 L15.5 8 L11 12.5 V10 H5 V12.5Z" fill="none" stroke="#5838c0" stroke-width="1.1"/></svg>
<svg class="a" style="left:334px;top:637px" width="5" height="3" viewBox="0 0 5 3" ><path d="M0 0H5L2.5 3Z" fill="#000"/></svg>
<svg class="a" style="left:345px;top:631px" width="16" height="16" viewBox="0 0 16 16" ><rect x="1.5" y="0.5" width="13" height="15" fill="#a8b8f8" stroke="#5838c0"/><path d="M1.5 4 H14.5 M5 0.5 V15.5" stroke="#5838c0" stroke-width="1"/></svg>
<svg class="a" style="left:368px;top:637px" width="5" height="3" viewBox="0 0 5 3" ><path d="M0 0H5L2.5 3Z" fill="#000"/></svg>
<svg class="a" style="left:379px;top:631px" width="16" height="16" viewBox="0 0 16 16" ><path d="M4 1 H13 Q16 1 16 4 V9 Q16 12 13 12 H7 L2 16 L4 12 Q1 12 1 9 V4 Q1 1 4 1Z" fill="none" stroke="#5838c0" stroke-width="1.1"/></svg>
<svg class="a" style="left:402px;top:637px" width="5" height="3" viewBox="0 0 5 3" ><path d="M0 0H5L2.5 3Z" fill="#000"/></svg>
<svg class="a" style="left:413px;top:631px" width="16" height="16" viewBox="0 0 16 16" ><path d="M8 0.8 L10 6 H15.5 L11 9.4 L12.8 15 L8 11.6 L3.2 15 L5 9.4 L0.5 6 H6Z" fill="none" stroke="#5838c0" stroke-width="1.1"/></svg>
<svg class="a" style="left:436px;top:637px" width="5" height="3" viewBox="0 0 5 3" ><path d="M0 0H5L2.5 3Z" fill="#000"/></svg>
<div class="chev" style="left:472px;top:630px;width:10px;height:20px"></div>
<svg class="a" style="left:474px;top:644px" width="5" height="3" viewBox="0 0 5 3" ><path d="M0 0H5L2.5 3Z" fill="#000"/></svg>
<svg class="a" style="left:473px;top:632px" width="9" height="6" viewBox="0 0 9 6" ><path d="M1 0.5 L4 3 L1 5.5 M5 0.5 L8 3 L5 5.5" fill="none" stroke="#000" stroke-width="1.3"/></svg>
<div class="a" style="left:29px;top:653px;width:455px;height:24px;background:#c0c0c0;border-top:1px solid #fff"></div>
<div class="sunk" style="left:33px;top:657px;width:188px;height:17px"></div>
<div class="sunk" style="left:225px;top:657px;width:211px;height:17px"></div>
<div class="sunk" style="left:439px;top:657px;width:39px;height:17px"></div>
<svg class="a" style="left:232px;top:659px" width="15" height="12" viewBox="0 0 15 12" shape-rendering="crispEdges"><g fill="#0000e0"><rect x="3" y="0" width="1" height="3"/><rect x="3" y="4" width="1" height="1"/><rect x="3" y="6" width="1" height="3"/><rect x="0" y="4" width="2" height="1"/><rect x="5" y="4" width="3" height="1"/></g><g fill="#000"><rect x="9" y="4" width="1" height="1"/><rect x="11" y="4" width="1" height="1"/><rect x="13" y="4" width="1" height="1"/><rect x="13" y="6" width="1" height="1"/><rect x="13" y="8" width="1" height="1"/><rect x="3" y="10" width="1" height="1"/><rect x="5" y="10" width="1" height="1"/><rect x="7" y="10" width="1" height="1"/><rect x="9" y="10" width="1" height="1"/><rect x="11" y="10" width="1" height="1"/><rect x="13" y="10" width="1" height="1"/></g></svg>
<div class="t" style="left:253px;top:659px;">14.03 / 0.32</div>
<svg class="a" style="left:336px;top:659px" width="15" height="12" viewBox="0 0 15 12" shape-rendering="crispEdges"><g fill="#000"><rect x="6" y="4" width="1" height="1"/><rect x="8" y="4" width="1" height="1"/><rect x="10" y="4" width="1" height="1"/><rect x="12" y="4" width="1" height="1"/><rect x="14" y="4" width="1" height="1"/><rect x="6" y="6" width="1" height="1"/><rect x="14" y="6" width="1" height="1"/><rect x="6" y="8" width="1" height="1"/><rect x="14" y="8" width="1" height="1"/><rect x="6" y="10" width="1" height="1"/><rect x="8" y="10" width="1" height="1"/><rect x="10" y="10" width="1" height="1"/><rect x="12" y="10" width="1" height="1"/><rect x="14" y="10" width="1" height="1"/><rect x="6" y="0" width="1" height="3"/><rect x="7" y="1" width="1" height="1"/><rect x="8" y="0" width="1" height="1"/><rect x="8" y="2" width="1" height="1"/><rect x="14" y="0" width="1" height="3"/><rect x="13" y="1" width="1" height="1"/><rect x="12" y="0" width="1" height="1"/><rect x="12" y="2" width="1" height="1"/><rect x="1" y="5" width="2" height="1"/><rect x="1" y="6" width="1" height="1"/><rect x="2" y="7" width="1" height="1"/><rect x="2" y="9" width="1" height="1"/><rect x="1" y="10" width="2" height="1"/></g></svg>
<div class="t" style="left:357px;top:659px;">0.00 x 0.00</div>
<div class="t" style="left:448px;top:659px;">12%</div>
<div class="a" style="left:899px;top:519px;width:125px;height:48px;background:#c0c0c0;border-top:1px solid #a8a8a8;border-left:1px solid #a8a8a8;border-bottom:1px solid #a8a8a8;box-shadow:inset 1px 1px 0 #fff"></div>
<div class="a" style="left:901px;top:521px;width:123px;height:18px;background:#a0a0a0"></div>
<div class="t" style="left:903px;top:524px;font-weight:bold;font-size:12px">Fontwork</div>
<div class="a" style="left:901px;top:539px;width:123px;height:27px;background:linear-gradient(#f6f6f6,#d6d6d6)"></div>
<svg class="a" style="left:908px;top:543px" width="16" height="16" viewBox="0 0 16 16" ><path d="M6 3 L8 1 L10 3" fill="none" stroke="#555"/><rect x="0.5" y="4.5" width="15" height="11" fill="#d8d8e0" stroke="#707080"/>
<rect x="2.5" y="6.5" width="11" height="7" fill="#f8f000"/><text x="8" y="13.2" font-size="8" font-family="Liberation Sans" font-weight="bold" fill="#000" text-anchor="middle">A</text></svg>
<div class="a" style="left:931px;top:544px;width:1px;height:18px;background:#8c8c8c"></div><div class="a" style="left:932px;top:544px;width:1px;height:18px;background:#fff"></div>
<svg class="a" style="left:940px;top:545px" width="18" height="16" viewBox="0 0 18 16" ><path d="M1 1 L16 6 L10 8 L14 15 M2 3 L10 8 L7 14" fill="none" stroke="#9a9a9a" stroke-width="1.8"/></svg>
<svg class="a" style="left:961px;top:551px" width="5" height="3" viewBox="0 0 5 3" ><path d="M0 0H5L2.5 3Z" fill="#8a8a8a"/></svg>
<svg class="a" style="left:972px;top:545px" width="18" height="15" viewBox="0 0 18 15" ><rect x="1" y="0" width="16" height="1.3" fill="#8a8a8a"/><text x="0" y="13" font-size="12" font-family="Liberation Sans" fill="#8a8a8a">A</text><text x="9" y="13" font-size="12" font-family="Liberation Sans" fill="#8a8a8a">a</text></svg>
<div class="a" style="left:996px;top:544px;width:1px;height:18px;background:#8c8c8c"></div><div class="a" style="left:997px;top:544px;width:1px;height:18px;background:#fff"></div>
<svg class="a" style="left:1005px;top:547px" width="14" height="11" viewBox="0 0 14 11" ><path d="M1 0.5H13M3 3.5H11M1 6.5H13M3 9.5H11" stroke="#555" stroke-width="1"/></svg>
</body></html>
